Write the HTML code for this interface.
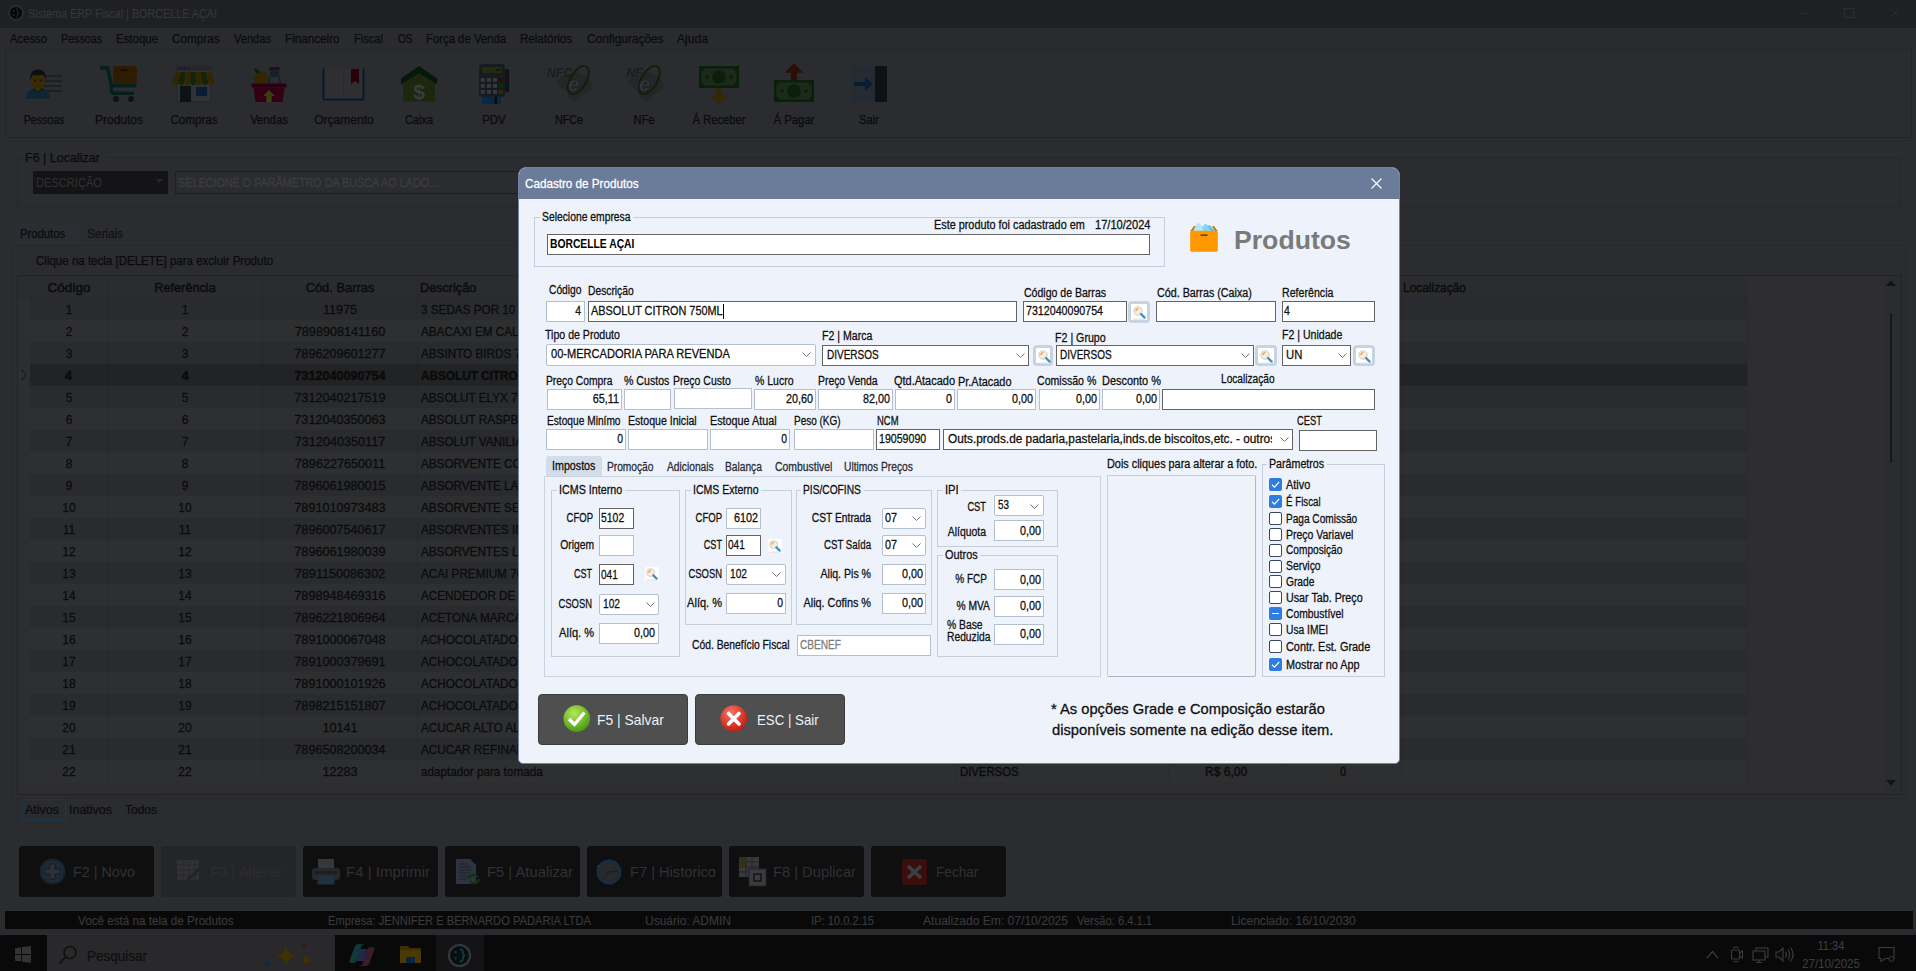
<!DOCTYPE html>
<html><head><meta charset="utf-8"><style>
html,body{margin:0;padding:0;width:1916px;height:971px;overflow:hidden;background:#2b2c2f}
body{position:relative;font-family:"Liberation Sans",sans-serif}
.t{position:absolute;white-space:nowrap;font-family:"Liberation Sans",sans-serif}
svg{overflow:visible}
</style></head><body>
<div style="position:absolute;left:0px;top:0px;width:1916px;height:971px;box-sizing:border-box;background:#2b2c2f"></div>
<div style="position:absolute;left:0px;top:0px;width:1916px;height:28px;box-sizing:border-box;background:#1f2023"></div>
<div style="position:absolute;left:0px;top:28px;width:1916px;height:21px;box-sizing:border-box;background:#2a2b2e"></div>
<svg style="position:absolute;left:7px;top:4px;" width="18" height="18" viewBox="0 0 18 18"><circle cx="9" cy="9" r="7" fill="#070707" stroke="#2a2a2c" stroke-width="2"/><circle cx="6.6" cy="7" r="1" fill="#07313a"/><circle cx="6.6" cy="11" r="1" fill="#07313a"/><path d="M9 4.5 q1.5 0 1.5 1.5 v2 l1 1 l-1 1 v2 q0 1.5 -1.5 1.5" fill="none" stroke="#07313a" stroke-width="1.2"/></svg>
<div class="t" style="left:28.00px;transform-origin:0 50%;transform:scaleX(0.8989);top:5.80px;font-size:12.00px;line-height:16px;letter-spacing:0.000px;color:#36373a;-webkit-text-stroke:0.10px #36373a;">Sistema ERP Fiscal | BORCELLE AÇAI</div>
<div style="position:absolute;left:1798px;top:13px;width:10px;height:1px;box-sizing:border-box;background:#2a2b2e"></div>
<div style="position:absolute;left:1844px;top:8px;width:10px;height:10px;box-sizing:border-box;border:1px solid #2c2d30"></div>
<svg style="position:absolute;left:1890px;top:8px;" width="10" height="10" viewBox="0 0 10 10"><path d="M0.5 0.5 L9.5 9.5 M9.5 0.5 L0.5 9.5" stroke="#2c2d30" stroke-width="1"/></svg>
<div class="t" style="left:10.00px;transform-origin:0 50%;transform:scaleX(0.9404);top:30.80px;font-size:12.00px;line-height:16px;letter-spacing:0.000px;color:#0b0b0c;-webkit-text-stroke:0.25px #0b0b0c;">Acesso</div>
<div class="t" style="left:61.00px;transform-origin:0 50%;transform:scaleX(0.8910);top:30.80px;font-size:12.00px;line-height:16px;letter-spacing:0.000px;color:#0b0b0c;-webkit-text-stroke:0.25px #0b0b0c;">Pessoas</div>
<div class="t" style="left:116.00px;transform-origin:0 50%;transform:scaleX(0.9542);top:30.80px;font-size:12.00px;line-height:16px;letter-spacing:0.000px;color:#0b0b0c;-webkit-text-stroke:0.25px #0b0b0c;">Estoque</div>
<div class="t" style="left:172.40px;transform-origin:0 50%;transform:scaleX(0.9777);top:30.80px;font-size:12.00px;line-height:16px;letter-spacing:0.000px;color:#0b0b0c;-webkit-text-stroke:0.25px #0b0b0c;">Compras</div>
<div class="t" style="left:234.30px;transform-origin:0 50%;transform:scaleX(0.9243);top:30.80px;font-size:12.00px;line-height:16px;letter-spacing:0.000px;color:#0b0b0c;-webkit-text-stroke:0.25px #0b0b0c;">Vendas</div>
<div class="t" style="left:285.20px;transform-origin:0 50%;transform:scaleX(0.9745);top:30.80px;font-size:12.00px;line-height:16px;letter-spacing:0.000px;color:#0b0b0c;-webkit-text-stroke:0.25px #0b0b0c;">Financeiro</div>
<div class="t" style="left:354.00px;transform-origin:0 50%;transform:scaleX(0.9252);top:30.80px;font-size:12.00px;line-height:16px;letter-spacing:0.000px;color:#0b0b0c;-webkit-text-stroke:0.25px #0b0b0c;">Fiscal</div>
<div class="t" style="left:397.50px;transform-origin:0 50%;transform:scaleX(0.8368);top:30.80px;font-size:12.00px;line-height:16px;letter-spacing:0.000px;color:#0b0b0c;-webkit-text-stroke:0.25px #0b0b0c;">OS</div>
<div class="t" style="left:426.00px;transform-origin:0 50%;transform:scaleX(0.9445);top:30.80px;font-size:12.00px;line-height:16px;letter-spacing:0.000px;color:#0b0b0c;-webkit-text-stroke:0.25px #0b0b0c;">Força de Venda</div>
<div class="t" style="left:520.00px;transform-origin:0 50%;transform:scaleX(0.9624);top:30.80px;font-size:12.00px;line-height:16px;letter-spacing:0.000px;color:#0b0b0c;-webkit-text-stroke:0.25px #0b0b0c;">Relatórios</div>
<div class="t" style="left:586.50px;transform-origin:0 50%;transform:scaleX(0.9887);top:30.80px;font-size:12.00px;line-height:16px;letter-spacing:0.000px;color:#0b0b0c;-webkit-text-stroke:0.25px #0b0b0c;">Configurações</div>
<div class="t" style="left:677.00px;transform-origin:0 50%;transform:scaleX(1.0102);top:30.80px;font-size:12.00px;line-height:16px;letter-spacing:0.000px;color:#0b0b0c;-webkit-text-stroke:0.25px #0b0b0c;">Ajuda</div>
<div style="position:absolute;left:5px;top:49px;width:1907px;height:89px;box-sizing:border-box;border:1px solid #242528"></div>
<div class="t" style="left:-456.50px;width:1000px;text-align:center;transform-origin:50% 50%;transform:scaleX(0.8845);top:111.50px;font-size:12.00px;line-height:16px;letter-spacing:0.000px;color:#0b0b0c;-webkit-text-stroke:0.25px #0b0b0c;">Pessoas</div>
<div class="t" style="left:-381.50px;width:1000px;text-align:center;transform-origin:50% 50%;transform:scaleX(0.9955);top:111.50px;font-size:12.00px;line-height:16px;letter-spacing:0.000px;color:#0b0b0c;-webkit-text-stroke:0.25px #0b0b0c;">Produtos</div>
<div class="t" style="left:-306.50px;width:1000px;text-align:center;transform-origin:50% 50%;transform:scaleX(0.9653);top:111.50px;font-size:12.00px;line-height:16px;letter-spacing:0.000px;color:#0b0b0c;-webkit-text-stroke:0.25px #0b0b0c;">Compras</div>
<div class="t" style="left:-231.50px;width:1000px;text-align:center;transform-origin:50% 50%;transform:scaleX(0.9393);top:111.50px;font-size:12.00px;line-height:16px;letter-spacing:0.000px;color:#0b0b0c;-webkit-text-stroke:0.25px #0b0b0c;">Vendas</div>
<div class="t" style="left:-156.50px;width:1000px;text-align:center;transform-origin:50% 50%;transform:scaleX(1.0026);top:111.50px;font-size:12.00px;line-height:16px;letter-spacing:0.000px;color:#0b0b0c;-webkit-text-stroke:0.25px #0b0b0c;">Orçamento</div>
<div class="t" style="left:-81.50px;width:1000px;text-align:center;transform-origin:50% 50%;transform:scaleX(0.9189);top:111.50px;font-size:12.00px;line-height:16px;letter-spacing:0.000px;color:#0b0b0c;-webkit-text-stroke:0.25px #0b0b0c;">Caixa</div>
<div class="t" style="left:-6.50px;width:1000px;text-align:center;transform-origin:50% 50%;transform:scaleX(0.9525);top:111.50px;font-size:12.00px;line-height:16px;letter-spacing:0.000px;color:#0b0b0c;-webkit-text-stroke:0.25px #0b0b0c;">PDV</div>
<div class="t" style="left:68.50px;width:1000px;text-align:center;transform-origin:50% 50%;transform:scaleX(0.8997);top:111.50px;font-size:12.00px;line-height:16px;letter-spacing:0.000px;color:#0b0b0c;-webkit-text-stroke:0.25px #0b0b0c;">NFCe</div>
<div class="t" style="left:143.50px;width:1000px;text-align:center;transform-origin:50% 50%;transform:scaleX(0.9263);top:111.50px;font-size:12.00px;line-height:16px;letter-spacing:0.000px;color:#0b0b0c;-webkit-text-stroke:0.25px #0b0b0c;">NFe</div>
<div class="t" style="left:218.50px;width:1000px;text-align:center;transform-origin:50% 50%;transform:scaleX(0.9314);top:111.50px;font-size:12.00px;line-height:16px;letter-spacing:0.000px;color:#0b0b0c;-webkit-text-stroke:0.25px #0b0b0c;">Á Receber</div>
<div class="t" style="left:293.50px;width:1000px;text-align:center;transform-origin:50% 50%;transform:scaleX(0.9482);top:111.50px;font-size:12.00px;line-height:16px;letter-spacing:0.000px;color:#0b0b0c;-webkit-text-stroke:0.25px #0b0b0c;">Á Pagar</div>
<div class="t" style="left:368.50px;width:1000px;text-align:center;transform-origin:50% 50%;transform:scaleX(0.9370);top:111.50px;font-size:12.00px;line-height:16px;letter-spacing:0.000px;color:#0b0b0c;-webkit-text-stroke:0.25px #0b0b0c;">Sair</div>
<svg style="position:absolute;left:24px;top:66px;" width="40" height="36" viewBox="0 0 40 36">
    <rect x="21" y="9.2" width="17" height="1.8" fill="#1c1f22"/>
    <rect x="21" y="14.2" width="17" height="1.8" fill="#1c1f22"/>
    <rect x="19" y="19.1" width="19" height="1.8" fill="#1c1f22"/>
    <rect x="21" y="24.1" width="17" height="1.8" fill="#1c1f22"/>
    <path d="M2 32.8 q0-10.5 12-10.5 q12 0 12 10.5 z" fill="#0c2633"/>
    <path d="M9.5 22.8 q4.5 4.2 9 0" stroke="#07141f" stroke-width="1.8" fill="none"/>
    <rect x="11" y="20" width="6" height="5" rx="2" fill="#392b00"/>
    <ellipse cx="14" cy="16" rx="6.6" ry="8" fill="#392b00"/>
    <path d="M6.5 15 q-1.5-11 7.5-11.5 q9 0.5 7.5 11.5 q-0.5-5-3-6.5 q-4.5 1.5-9 0 q-2.5 1.5-3 6.5z" fill="#0d0d0d"/>
    <circle cx="11" cy="14.4" r="0.9" fill="#190c04"/><circle cx="17" cy="14.4" r="0.9" fill="#190c04"/></svg>
<svg style="position:absolute;left:99px;top:65px;" width="40" height="38" viewBox="0 0 40 38">
    <rect x="14.1" y="1" width="23.8" height="17.8" rx="2" fill="#2d1c00"/>
    <rect x="21.5" y="4.5" width="7" height="1.3" fill="#120b00"/>
    <circle cx="3" cy="2.8" r="2.2" fill="#05211e"/>
    <path d="M3 2.8 H8.5 L12.2 19.4 V25 q0 3.2 3.2 3.2 H35" fill="none" stroke="#05211e" stroke-width="3.5"/>
    <path d="M13 19.1 H38 L36.5 22.6 H13z" fill="#05211e"/>
    <circle cx="17" cy="34" r="2.9" fill="#0c1314"/><circle cx="32" cy="34" r="2.9" fill="#0c1314"/></svg>
<svg style="position:absolute;left:172px;top:65px;" width="44" height="38" viewBox="0 0 44 38">
    <rect x="4" y="0.5" width="36" height="37" fill="#26272a"/>
    <rect x="5.5" y="6" width="33" height="30" fill="#313235"/>
    <circle cx="8.5" cy="3.3" r="1.1" fill="#1a1b1d"/><circle cx="12.5" cy="3.3" r="1.1" fill="#1a1b1d"/><circle cx="16.5" cy="3.3" r="1.1" fill="#1a1b1d"/>
    <path d="M4 7 h4.6 l-2.4 10 h-5.6z" fill="#332600"/><path d="M8.6 7 h5 l-1 10 h-6.4z" fill="#14240b"/><path d="M13.6 7 h5 l-0.4 10 h-6z" fill="#332600"/>
    <path d="M18.6 7 h5 l0.4 10 h-6z" fill="#14240b"/><path d="M23.6 7 h5 l1 10 h-6z" fill="#332600"/><path d="M28.6 7 h5 l2.2 10 h-6.2z" fill="#14240b"/><path d="M33.6 7 h5 l4 10 h-6.8z" fill="#332600"/>
    <circle cx="3.3" cy="17" r="3" fill="#332600"/><circle cx="9.3" cy="17" r="3" fill="#14240b"/><circle cx="15.3" cy="17" r="3" fill="#332600"/><circle cx="21.3" cy="17" r="3" fill="#14240b"/><circle cx="27.3" cy="17" r="3" fill="#332600"/><circle cx="33.3" cy="17" r="3" fill="#14240b"/><circle cx="39.3" cy="17" r="3" fill="#332600"/>
    <rect x="8" y="21" width="11" height="16" fill="#0d1214"/>
    <rect x="24" y="22" width="11" height="9" fill="#071d33"/></svg>
<svg style="position:absolute;left:250px;top:64px;" width="38" height="40" viewBox="0 0 38 40">
    <rect x="19" y="3" width="11" height="3.6" rx="1.8" fill="#1e0e26"/>
    <path d="M20 6.5 h9 v5 l3.5 11 h-16 l3.5-11z" fill="#152128"/>
    <path d="M21 13 h7 l2.5 9.5 h-12z" fill="#2b2c2f"/>
    <circle cx="11" cy="14.5" r="7.2" fill="#352600"/>
    <path d="M3.5 4.5 q5 0 7 5 q-5 0.5-7-5z" fill="#07220b"/>
    <rect x="1.5" y="19.5" width="35" height="4" rx="1" fill="#2a0012"/>
    <path d="M3.5 23.5 h31 l-2 14.5 h-27z" fill="#330012"/>
    <path d="M19 26 l6 6 h-3.3 v6 h-5.4 v-6 h-3.3z" fill="#3d3c12"/></svg>
<svg style="position:absolute;left:322px;top:67px;" width="44" height="35" viewBox="0 0 44 35">
    <path d="M1.5 1.5 v29.5 q0 1.5 1.5 1.5 h37 q1.5 0 1.5 -1.5 v-29.5" fill="#2f2f31" stroke="#021b2d" stroke-width="2"/>
    <rect x="21" y="1" width="0.8" height="31" fill="#2a2a2c"/>
    <path d="M29 2 h8 v15 l-4-3 l-4 3z" fill="#280005"/></svg>
<svg style="position:absolute;left:400px;top:65px;" width="38" height="38" viewBox="0 0 38 38">
    <path d="M3.1 18.3 L19.1 8.3 L35 18.3 V36.8 H3.1z" fill="#1c280e"/>
    <path d="M1.1 13.5 L19.1 1.1 L37.1 13.5 V19.5 L19.1 8.3 L1.1 19.5z" fill="#05190a"/>
    <text x="19.1" y="33.5" font-family="Liberation Sans" font-weight="bold" font-size="21" text-anchor="middle" fill="#3a3b3d">$</text></svg>
<svg style="position:absolute;left:478px;top:63px;" width="34" height="42" viewBox="0 0 34 42">
    <rect x="27" y="6" width="4.2" height="23.5" rx="1.8" fill="#101417"/>
    <rect x="1.1" y="1.1" width="25.8" height="32.6" rx="3" fill="#151b20"/>
    <rect x="4" y="4" width="20" height="6" fill="#242b0e"/>
    <rect x="18.5" y="6.3" width="1.6" height="1.6" fill="#0b0d05"/><rect x="21" y="6.3" width="1.6" height="1.6" fill="#0b0d05"/>
    <g fill="#39393b"><rect x="2.8" y="15" width="4" height="3.8"/><rect x="9" y="15" width="4" height="3.8"/><rect x="15" y="15" width="4" height="3.8"/>
    <rect x="2.8" y="21" width="4" height="3.8"/><rect x="9" y="21" width="4" height="3.8"/><rect x="15" y="21" width="4" height="3.8"/>
    <rect x="2.8" y="27" width="4" height="3.8"/><rect x="9" y="27" width="4" height="3.8"/><rect x="15" y="27" width="4" height="3.8"/></g>
    <rect x="21" y="15" width="4" height="3.8" fill="#350909"/><rect x="21" y="21" width="4" height="3.8" fill="#0f2b0f"/><rect x="21" y="27" width="4" height="3.8" fill="#372800"/>
    <rect x="4" y="33.7" width="19" height="7.3" rx="1" fill="#0a2745"/><rect x="16.5" y="33.7" width="2.5" height="7.3" fill="#0b0b0b"/></svg>
<svg style="position:absolute;left:546px;top:64px;" width="48" height="40" viewBox="0 0 48 40">
        <path d="M10 18 Q14 12 22 11 L30 8 Q40 10 44 16 L47 22 Q44 28 38 30 L34 34 Q30 36 30 38 L26 36 Q22 32 20 26 Q14 24 10 18z" fill="#252628"/>
        <text x="0.8" y="12.7" font-family="Liberation Sans" font-style="italic" font-weight="bold" font-size="12.5" fill="#1c1d1f">NFC</text>
        <ellipse cx="33.5" cy="16" rx="8" ry="15.5" transform="rotate(30 33.5 16)" fill="none" stroke="#291e00" stroke-width="0.9"/>
        <ellipse cx="32" cy="16" rx="8" ry="15.5" transform="rotate(30 32 16)" fill="none" stroke="#0a1e0a" stroke-width="1.2"/>
        <text x="22" y="27" font-family="Liberation Sans" font-style="italic" font-weight="bold" font-size="20" fill="#38393b" stroke="#1c1d1f" stroke-width="0.6">e</text></svg>
<svg style="position:absolute;left:617px;top:64px;" width="48" height="40" viewBox="0 0 48 40">
        <path d="M10 18 Q14 12 22 11 L30 8 Q40 10 44 16 L47 22 Q44 28 38 30 L34 34 Q30 36 30 38 L26 36 Q22 32 20 26 Q14 24 10 18z" fill="#252628"/>
        <text x="9.2" y="12.7" font-family="Liberation Sans" font-style="italic" font-weight="bold" font-size="12.5" fill="#1c1d1f">NF</text>
        <ellipse cx="33.5" cy="16" rx="8" ry="15.5" transform="rotate(30 33.5 16)" fill="none" stroke="#291e00" stroke-width="0.9"/>
        <ellipse cx="32" cy="16" rx="8" ry="15.5" transform="rotate(30 32 16)" fill="none" stroke="#0a1e0a" stroke-width="1.2"/>
        <text x="22" y="27" font-family="Liberation Sans" font-style="italic" font-weight="bold" font-size="20" fill="#38393b" stroke="#1c1d1f" stroke-width="0.6">e</text></svg>
<svg style="position:absolute;left:698px;top:65px;" width="42" height="42" viewBox="0 0 42 42">
    <rect x="1" y="1" width="40" height="22" fill="#082108"/>
    <rect x="3.5" y="3.5" width="35" height="17" fill="#1c2a1c"/>
    <circle cx="3.5" cy="3.5" r="2.6" fill="#082108"/><circle cx="38.5" cy="3.5" r="2.6" fill="#082108"/><circle cx="3.5" cy="20.5" r="2.6" fill="#082108"/><circle cx="38.5" cy="20.5" r="2.6" fill="#082108"/>
    <circle cx="21" cy="12" r="6.8" fill="#0a1e0a"/><circle cx="9" cy="12" r="1.8" fill="#0a1e0a"/><circle cx="33" cy="12" r="1.8" fill="#0a1e0a"/>
    <path d="M18.3 23 h5.7 v7 h6 l-9 9.5 l-9-9.5 h6.3z" fill="#352800"/></svg>
<svg style="position:absolute;left:773px;top:62px;" width="42" height="42" viewBox="0 0 42 42">
    <path d="M17.9 19 h6 v-8.2 h6.1 l-9-9.8 l-9.2 9.8 h6.1z" fill="#2b0e06"/>
    <rect x="1" y="18" width="40" height="22" fill="#082108"/>
    <rect x="3.5" y="20.5" width="35" height="17" fill="#1c2a1c"/>
    <circle cx="3.5" cy="20.5" r="2.6" fill="#082108"/><circle cx="38.5" cy="20.5" r="2.6" fill="#082108"/><circle cx="3.5" cy="37.5" r="2.6" fill="#082108"/><circle cx="38.5" cy="37.5" r="2.6" fill="#082108"/>
    <circle cx="21" cy="29" r="6.8" fill="#0a1e0a"/><circle cx="9" cy="29" r="1.8" fill="#0a1e0a"/><circle cx="33" cy="29" r="1.8" fill="#0a1e0a"/></svg>
<svg style="position:absolute;left:851px;top:66px;" width="38" height="36" viewBox="0 0 38 36">
    <rect x="0" y="0" width="24" height="36" fill="#252b33"/>
    <rect x="24" y="0" width="12" height="36" fill="#0f1215"/>
    <path d="M3 16 h11 v-5 l8 7 l-8 7 v-5 h-11z" fill="#071e32"/></svg>
<div style="position:absolute;left:17px;top:157px;width:1884px;height:50px;box-sizing:border-box;border:1px solid #25262a"></div>
<div style="position:absolute;left:22px;top:150px;width:84px;height:14px;box-sizing:border-box;background:#2b2c2f"></div>
<div class="t" style="left:25.00px;transform-origin:0 50%;transform:scaleX(1.0444);top:149.60px;font-size:12.00px;line-height:16px;letter-spacing:0.000px;color:#0b0b0c;-webkit-text-stroke:0.25px #0b0b0c;">F6 | Localizar</div>
<div style="position:absolute;left:33px;top:171px;width:135px;height:23px;box-sizing:border-box;background:#141416"></div>
<div class="t" style="left:35.50px;transform-origin:0 50%;transform:scaleX(0.9251);top:174.60px;font-size:12.00px;line-height:16px;letter-spacing:0.000px;color:#303135;">DESCRIÇÃO</div>
<svg style="position:absolute;left:155px;top:179px;" width="9" height="6" viewBox="0 0 9 6"><path d="M1 0 h7 l-3.5 4z" fill="#26272a"/></svg>
<div style="position:absolute;left:175px;top:171px;width:1220px;height:23px;box-sizing:border-box;border:1px solid #1e1f22;background:#2b2c2f"></div>
<div class="t" style="left:177.50px;transform-origin:0 50%;transform:scaleX(0.8993);top:174.60px;font-size:12.00px;line-height:16px;letter-spacing:0.000px;color:#3b3c3f;-webkit-text-stroke:0.35px #3b3c3f;">SELECIONE O PARÂMETRO DA BUSCA AO LADO...</div>
<div style="position:absolute;left:14px;top:221px;width:65px;height:25px;box-sizing:border-box;background:#2a2d31;border-radius:3px 3px 0 0"></div>
<div class="t" style="left:20.00px;transform-origin:0 50%;transform:scaleX(0.9372);top:225.60px;font-size:12.00px;line-height:16px;letter-spacing:0.000px;color:#0b0b0c;-webkit-text-stroke:0.25px #0b0b0c;">Produtos</div>
<div class="t" style="left:87.00px;transform-origin:0 50%;transform:scaleX(0.9813);top:226.20px;font-size:12.00px;line-height:16px;letter-spacing:0.000px;color:#121213;-webkit-text-stroke:0.25px #121213;">Seriais</div>
<div style="position:absolute;left:12px;top:245px;width:1894px;height:554px;box-sizing:border-box;border:1px solid #26272a"></div>
<div class="t" style="left:36.00px;transform-origin:0 50%;transform:scaleX(0.9605);top:253.40px;font-size:12.00px;line-height:16px;letter-spacing:0.000px;color:#0b0b0c;-webkit-text-stroke:0.25px #0b0b0c;">Clique na tecla [DELETE] para excluir Produto</div>
<div style="position:absolute;left:17px;top:275px;width:1885px;height:520px;box-sizing:border-box;border:1px solid #232427"></div>
<div style="position:absolute;left:18px;top:276px;width:1883px;height:517px;box-sizing:border-box;background:#2e2e30"></div>
<div style="position:absolute;left:18px;top:276px;width:1729px;height:22px;box-sizing:border-box;background:#2b2c2e"></div>
<div style="position:absolute;left:18px;top:297px;width:1729px;height:1px;box-sizing:border-box;background:#262729"></div>
<div style="position:absolute;left:18px;top:298px;width:12px;height:484px;box-sizing:border-box;background:#2d2e30"></div>
<div class="t" style="left:-431.50px;width:1000px;text-align:center;transform-origin:50% 50%;transform:scaleX(1.0432);top:278.80px;font-size:13.00px;line-height:17px;letter-spacing:0.000px;color:#0b0b0c;-webkit-text-stroke:0.45px #0b0b0c;">Código</div>
<div class="t" style="left:-314.70px;width:1000px;text-align:center;transform-origin:50% 50%;transform:scaleX(0.9763);top:278.80px;font-size:13.00px;line-height:17px;letter-spacing:0.000px;color:#0b0b0c;-webkit-text-stroke:0.45px #0b0b0c;">Referência</div>
<div class="t" style="left:-159.60px;width:1000px;text-align:center;transform-origin:50% 50%;transform:scaleX(0.9903);top:278.80px;font-size:13.00px;line-height:17px;letter-spacing:0.000px;color:#0b0b0c;-webkit-text-stroke:0.45px #0b0b0c;">Cód. Barras</div>
<div class="t" style="left:420.30px;transform-origin:0 50%;transform:scaleX(0.9738);top:278.80px;font-size:13.00px;line-height:17px;letter-spacing:0.000px;color:#0b0b0c;-webkit-text-stroke:0.45px #0b0b0c;">Descrição</div>
<div class="t" style="left:1403.00px;transform-origin:0 50%;transform:scaleX(0.9172);top:278.80px;font-size:13.00px;line-height:17px;letter-spacing:0.000px;color:#0b0b0c;-webkit-text-stroke:0.45px #0b0b0c;">Localização</div>
<div style="position:absolute;left:30px;top:298px;width:1717px;height:22px;box-sizing:border-box;background:#2a2b2e"></div>
<div class="t" style="left:-431.50px;width:1000px;text-align:center;transform-origin:50% 50%;transform:scaleX(0.9803);top:301.50px;font-size:12.20px;line-height:16px;letter-spacing:0.000px;color:#0b0b0c;-webkit-text-stroke:0.28px #0b0b0c;">1</div>
<div class="t" style="left:-314.70px;width:1000px;text-align:center;transform-origin:50% 50%;transform:scaleX(0.9803);top:301.50px;font-size:12.20px;line-height:16px;letter-spacing:0.000px;color:#0b0b0c;-webkit-text-stroke:0.28px #0b0b0c;">1</div>
<div class="t" style="left:-159.60px;width:1000px;text-align:center;transform-origin:50% 50%;transform:scaleX(1.0360);top:301.50px;font-size:12.20px;line-height:16px;letter-spacing:0.000px;color:#0b0b0c;-webkit-text-stroke:0.28px #0b0b0c;">11975</div>
<div class="t" style="left:421.00px;transform-origin:0 50%;transform:scaleX(0.9608);top:301.50px;font-size:12.20px;line-height:16px;letter-spacing:0.000px;color:#0b0b0c;-webkit-text-stroke:0.28px #0b0b0c;">3 SEDAS POR 10 UN</div>
<div style="position:absolute;left:30px;top:320px;width:1717px;height:22px;box-sizing:border-box;background:#2e2f31"></div>
<div class="t" style="left:-431.50px;width:1000px;text-align:center;transform-origin:50% 50%;transform:scaleX(0.9803);top:323.50px;font-size:12.20px;line-height:16px;letter-spacing:0.000px;color:#0b0b0c;-webkit-text-stroke:0.28px #0b0b0c;">2</div>
<div class="t" style="left:-314.70px;width:1000px;text-align:center;transform-origin:50% 50%;transform:scaleX(0.9803);top:323.50px;font-size:12.20px;line-height:16px;letter-spacing:0.000px;color:#0b0b0c;-webkit-text-stroke:0.28px #0b0b0c;">2</div>
<div class="t" style="left:-159.60px;width:1000px;text-align:center;transform-origin:50% 50%;transform:scaleX(1.0360);top:323.50px;font-size:12.20px;line-height:16px;letter-spacing:0.000px;color:#0b0b0c;-webkit-text-stroke:0.28px #0b0b0c;">7898908141160</div>
<div class="t" style="left:421.00px;transform-origin:0 50%;transform:scaleX(0.9609);top:323.50px;font-size:12.20px;line-height:16px;letter-spacing:0.000px;color:#0b0b0c;-webkit-text-stroke:0.28px #0b0b0c;">ABACAXI EM CALDA</div>
<div style="position:absolute;left:30px;top:342px;width:1717px;height:22px;box-sizing:border-box;background:#2a2b2e"></div>
<div class="t" style="left:-431.50px;width:1000px;text-align:center;transform-origin:50% 50%;transform:scaleX(0.9803);top:345.50px;font-size:12.20px;line-height:16px;letter-spacing:0.000px;color:#0b0b0c;-webkit-text-stroke:0.28px #0b0b0c;">3</div>
<div class="t" style="left:-314.70px;width:1000px;text-align:center;transform-origin:50% 50%;transform:scaleX(0.9803);top:345.50px;font-size:12.20px;line-height:16px;letter-spacing:0.000px;color:#0b0b0c;-webkit-text-stroke:0.28px #0b0b0c;">3</div>
<div class="t" style="left:-159.60px;width:1000px;text-align:center;transform-origin:50% 50%;transform:scaleX(1.0360);top:345.50px;font-size:12.20px;line-height:16px;letter-spacing:0.000px;color:#0b0b0c;-webkit-text-stroke:0.28px #0b0b0c;">7896209601277</div>
<div class="t" style="left:421.00px;transform-origin:0 50%;transform:scaleX(0.9607);top:345.50px;font-size:12.20px;line-height:16px;letter-spacing:0.000px;color:#0b0b0c;-webkit-text-stroke:0.28px #0b0b0c;">ABSINTO BIRDS 750</div>
<div style="position:absolute;left:30px;top:364px;width:1717px;height:22px;box-sizing:border-box;background:#222325"></div>
<div class="t" style="left:-431.50px;width:1000px;text-align:center;transform-origin:50% 50%;transform:scaleX(1.0000);top:367.50px;font-size:12.50px;line-height:16px;letter-spacing:0.000px;color:#0b0b0c;font-weight:bold;-webkit-text-stroke:0.50px #0b0b0c;">4</div>
<div class="t" style="left:-314.70px;width:1000px;text-align:center;transform-origin:50% 50%;transform:scaleX(1.0000);top:367.50px;font-size:12.50px;line-height:16px;letter-spacing:0.000px;color:#0b0b0c;font-weight:bold;-webkit-text-stroke:0.50px #0b0b0c;">4</div>
<div class="t" style="left:-159.60px;width:1000px;text-align:center;transform-origin:50% 50%;transform:scaleX(1.0067);top:367.50px;font-size:12.50px;line-height:16px;letter-spacing:0.000px;color:#0b0b0c;font-weight:bold;-webkit-text-stroke:0.50px #0b0b0c;">7312040090754</div>
<div class="t" style="left:421.00px;transform-origin:0 50%;transform:scaleX(0.9406);top:367.50px;font-size:12.50px;line-height:16px;letter-spacing:0.000px;color:#0b0b0c;font-weight:bold;-webkit-text-stroke:0.50px #0b0b0c;">ABSOLUT CITRON 750ML</div>
<div style="position:absolute;left:30px;top:386px;width:1717px;height:22px;box-sizing:border-box;background:#2a2b2e"></div>
<div class="t" style="left:-431.50px;width:1000px;text-align:center;transform-origin:50% 50%;transform:scaleX(0.9803);top:389.50px;font-size:12.20px;line-height:16px;letter-spacing:0.000px;color:#0b0b0c;-webkit-text-stroke:0.28px #0b0b0c;">5</div>
<div class="t" style="left:-314.70px;width:1000px;text-align:center;transform-origin:50% 50%;transform:scaleX(0.9803);top:389.50px;font-size:12.20px;line-height:16px;letter-spacing:0.000px;color:#0b0b0c;-webkit-text-stroke:0.28px #0b0b0c;">5</div>
<div class="t" style="left:-159.60px;width:1000px;text-align:center;transform-origin:50% 50%;transform:scaleX(1.0360);top:389.50px;font-size:12.20px;line-height:16px;letter-spacing:0.000px;color:#0b0b0c;-webkit-text-stroke:0.28px #0b0b0c;">7312040217519</div>
<div class="t" style="left:421.00px;transform-origin:0 50%;transform:scaleX(0.9606);top:389.50px;font-size:12.20px;line-height:16px;letter-spacing:0.000px;color:#0b0b0c;-webkit-text-stroke:0.28px #0b0b0c;">ABSOLUT ELYX 750</div>
<div style="position:absolute;left:30px;top:408px;width:1717px;height:22px;box-sizing:border-box;background:#2e2f31"></div>
<div class="t" style="left:-431.50px;width:1000px;text-align:center;transform-origin:50% 50%;transform:scaleX(0.9803);top:411.50px;font-size:12.20px;line-height:16px;letter-spacing:0.000px;color:#0b0b0c;-webkit-text-stroke:0.28px #0b0b0c;">6</div>
<div class="t" style="left:-314.70px;width:1000px;text-align:center;transform-origin:50% 50%;transform:scaleX(0.9803);top:411.50px;font-size:12.20px;line-height:16px;letter-spacing:0.000px;color:#0b0b0c;-webkit-text-stroke:0.28px #0b0b0c;">6</div>
<div class="t" style="left:-159.60px;width:1000px;text-align:center;transform-origin:50% 50%;transform:scaleX(1.0360);top:411.50px;font-size:12.20px;line-height:16px;letter-spacing:0.000px;color:#0b0b0c;-webkit-text-stroke:0.28px #0b0b0c;">7312040350063</div>
<div class="t" style="left:421.00px;transform-origin:0 50%;transform:scaleX(0.9610);top:411.50px;font-size:12.20px;line-height:16px;letter-spacing:0.000px;color:#0b0b0c;-webkit-text-stroke:0.28px #0b0b0c;">ABSOLUT RASPBERRI</div>
<div style="position:absolute;left:30px;top:430px;width:1717px;height:22px;box-sizing:border-box;background:#2a2b2e"></div>
<div class="t" style="left:-431.50px;width:1000px;text-align:center;transform-origin:50% 50%;transform:scaleX(0.9803);top:433.50px;font-size:12.20px;line-height:16px;letter-spacing:0.000px;color:#0b0b0c;-webkit-text-stroke:0.28px #0b0b0c;">7</div>
<div class="t" style="left:-314.70px;width:1000px;text-align:center;transform-origin:50% 50%;transform:scaleX(0.9803);top:433.50px;font-size:12.20px;line-height:16px;letter-spacing:0.000px;color:#0b0b0c;-webkit-text-stroke:0.28px #0b0b0c;">7</div>
<div class="t" style="left:-159.60px;width:1000px;text-align:center;transform-origin:50% 50%;transform:scaleX(1.0360);top:433.50px;font-size:12.20px;line-height:16px;letter-spacing:0.000px;color:#0b0b0c;-webkit-text-stroke:0.28px #0b0b0c;">7312040350117</div>
<div class="t" style="left:421.00px;transform-origin:0 50%;transform:scaleX(0.9607);top:433.50px;font-size:12.20px;line-height:16px;letter-spacing:0.000px;color:#0b0b0c;-webkit-text-stroke:0.28px #0b0b0c;">ABSOLUT VANILIA</div>
<div style="position:absolute;left:30px;top:452px;width:1717px;height:22px;box-sizing:border-box;background:#2e2f31"></div>
<div class="t" style="left:-431.50px;width:1000px;text-align:center;transform-origin:50% 50%;transform:scaleX(0.9803);top:455.50px;font-size:12.20px;line-height:16px;letter-spacing:0.000px;color:#0b0b0c;-webkit-text-stroke:0.28px #0b0b0c;">8</div>
<div class="t" style="left:-314.70px;width:1000px;text-align:center;transform-origin:50% 50%;transform:scaleX(0.9803);top:455.50px;font-size:12.20px;line-height:16px;letter-spacing:0.000px;color:#0b0b0c;-webkit-text-stroke:0.28px #0b0b0c;">8</div>
<div class="t" style="left:-159.60px;width:1000px;text-align:center;transform-origin:50% 50%;transform:scaleX(1.0360);top:455.50px;font-size:12.20px;line-height:16px;letter-spacing:0.000px;color:#0b0b0c;-webkit-text-stroke:0.28px #0b0b0c;">7896227650011</div>
<div class="t" style="left:421.00px;transform-origin:0 50%;transform:scaleX(0.9610);top:455.50px;font-size:12.20px;line-height:16px;letter-spacing:0.000px;color:#0b0b0c;-webkit-text-stroke:0.28px #0b0b0c;">ABSORVENTE COM</div>
<div style="position:absolute;left:30px;top:474px;width:1717px;height:22px;box-sizing:border-box;background:#2a2b2e"></div>
<div class="t" style="left:-431.50px;width:1000px;text-align:center;transform-origin:50% 50%;transform:scaleX(0.9803);top:477.50px;font-size:12.20px;line-height:16px;letter-spacing:0.000px;color:#0b0b0c;-webkit-text-stroke:0.28px #0b0b0c;">9</div>
<div class="t" style="left:-314.70px;width:1000px;text-align:center;transform-origin:50% 50%;transform:scaleX(0.9803);top:477.50px;font-size:12.20px;line-height:16px;letter-spacing:0.000px;color:#0b0b0c;-webkit-text-stroke:0.28px #0b0b0c;">9</div>
<div class="t" style="left:-159.60px;width:1000px;text-align:center;transform-origin:50% 50%;transform:scaleX(1.0360);top:477.50px;font-size:12.20px;line-height:16px;letter-spacing:0.000px;color:#0b0b0c;-webkit-text-stroke:0.28px #0b0b0c;">7896061980015</div>
<div class="t" style="left:421.00px;transform-origin:0 50%;transform:scaleX(0.9611);top:477.50px;font-size:12.20px;line-height:16px;letter-spacing:0.000px;color:#0b0b0c;-webkit-text-stroke:0.28px #0b0b0c;">ABSORVENTE LAVANDA</div>
<div style="position:absolute;left:30px;top:496px;width:1717px;height:22px;box-sizing:border-box;background:#2e2f31"></div>
<div class="t" style="left:-431.50px;width:1000px;text-align:center;transform-origin:50% 50%;transform:scaleX(0.9803);top:499.50px;font-size:12.20px;line-height:16px;letter-spacing:0.000px;color:#0b0b0c;-webkit-text-stroke:0.28px #0b0b0c;">10</div>
<div class="t" style="left:-314.70px;width:1000px;text-align:center;transform-origin:50% 50%;transform:scaleX(0.9803);top:499.50px;font-size:12.20px;line-height:16px;letter-spacing:0.000px;color:#0b0b0c;-webkit-text-stroke:0.28px #0b0b0c;">10</div>
<div class="t" style="left:-159.60px;width:1000px;text-align:center;transform-origin:50% 50%;transform:scaleX(1.0360);top:499.50px;font-size:12.20px;line-height:16px;letter-spacing:0.000px;color:#0b0b0c;-webkit-text-stroke:0.28px #0b0b0c;">7891010973483</div>
<div class="t" style="left:421.00px;transform-origin:0 50%;transform:scaleX(0.9611);top:499.50px;font-size:12.20px;line-height:16px;letter-spacing:0.000px;color:#0b0b0c;-webkit-text-stroke:0.28px #0b0b0c;">ABSORVENTE SEMPRE</div>
<div style="position:absolute;left:30px;top:518px;width:1717px;height:22px;box-sizing:border-box;background:#2a2b2e"></div>
<div class="t" style="left:-431.50px;width:1000px;text-align:center;transform-origin:50% 50%;transform:scaleX(0.9803);top:521.50px;font-size:12.20px;line-height:16px;letter-spacing:0.000px;color:#0b0b0c;-webkit-text-stroke:0.28px #0b0b0c;">11</div>
<div class="t" style="left:-314.70px;width:1000px;text-align:center;transform-origin:50% 50%;transform:scaleX(0.9803);top:521.50px;font-size:12.20px;line-height:16px;letter-spacing:0.000px;color:#0b0b0c;-webkit-text-stroke:0.28px #0b0b0c;">11</div>
<div class="t" style="left:-159.60px;width:1000px;text-align:center;transform-origin:50% 50%;transform:scaleX(1.0360);top:521.50px;font-size:12.20px;line-height:16px;letter-spacing:0.000px;color:#0b0b0c;-webkit-text-stroke:0.28px #0b0b0c;">7896007540617</div>
<div class="t" style="left:421.00px;transform-origin:0 50%;transform:scaleX(0.9610);top:521.50px;font-size:12.20px;line-height:16px;letter-spacing:0.000px;color:#0b0b0c;-webkit-text-stroke:0.28px #0b0b0c;">ABSORVENTES INTIMUS</div>
<div style="position:absolute;left:30px;top:540px;width:1717px;height:22px;box-sizing:border-box;background:#2e2f31"></div>
<div class="t" style="left:-431.50px;width:1000px;text-align:center;transform-origin:50% 50%;transform:scaleX(0.9803);top:543.50px;font-size:12.20px;line-height:16px;letter-spacing:0.000px;color:#0b0b0c;-webkit-text-stroke:0.28px #0b0b0c;">12</div>
<div class="t" style="left:-314.70px;width:1000px;text-align:center;transform-origin:50% 50%;transform:scaleX(0.9803);top:543.50px;font-size:12.20px;line-height:16px;letter-spacing:0.000px;color:#0b0b0c;-webkit-text-stroke:0.28px #0b0b0c;">12</div>
<div class="t" style="left:-159.60px;width:1000px;text-align:center;transform-origin:50% 50%;transform:scaleX(1.0360);top:543.50px;font-size:12.20px;line-height:16px;letter-spacing:0.000px;color:#0b0b0c;-webkit-text-stroke:0.28px #0b0b0c;">7896061980039</div>
<div class="t" style="left:421.00px;transform-origin:0 50%;transform:scaleX(0.9610);top:543.50px;font-size:12.20px;line-height:16px;letter-spacing:0.000px;color:#0b0b0c;-webkit-text-stroke:0.28px #0b0b0c;">ABSORVENTES LIVRE</div>
<div style="position:absolute;left:30px;top:562px;width:1717px;height:22px;box-sizing:border-box;background:#2a2b2e"></div>
<div class="t" style="left:-431.50px;width:1000px;text-align:center;transform-origin:50% 50%;transform:scaleX(0.9803);top:565.50px;font-size:12.20px;line-height:16px;letter-spacing:0.000px;color:#0b0b0c;-webkit-text-stroke:0.28px #0b0b0c;">13</div>
<div class="t" style="left:-314.70px;width:1000px;text-align:center;transform-origin:50% 50%;transform:scaleX(0.9803);top:565.50px;font-size:12.20px;line-height:16px;letter-spacing:0.000px;color:#0b0b0c;-webkit-text-stroke:0.28px #0b0b0c;">13</div>
<div class="t" style="left:-159.60px;width:1000px;text-align:center;transform-origin:50% 50%;transform:scaleX(1.0360);top:565.50px;font-size:12.20px;line-height:16px;letter-spacing:0.000px;color:#0b0b0c;-webkit-text-stroke:0.28px #0b0b0c;">7891150086302</div>
<div class="t" style="left:421.00px;transform-origin:0 50%;transform:scaleX(0.9608);top:565.50px;font-size:12.20px;line-height:16px;letter-spacing:0.000px;color:#0b0b0c;-webkit-text-stroke:0.28px #0b0b0c;">ACAI PREMIUM 700</div>
<div style="position:absolute;left:30px;top:584px;width:1717px;height:22px;box-sizing:border-box;background:#2e2f31"></div>
<div class="t" style="left:-431.50px;width:1000px;text-align:center;transform-origin:50% 50%;transform:scaleX(0.9803);top:587.50px;font-size:12.20px;line-height:16px;letter-spacing:0.000px;color:#0b0b0c;-webkit-text-stroke:0.28px #0b0b0c;">14</div>
<div class="t" style="left:-314.70px;width:1000px;text-align:center;transform-origin:50% 50%;transform:scaleX(0.9803);top:587.50px;font-size:12.20px;line-height:16px;letter-spacing:0.000px;color:#0b0b0c;-webkit-text-stroke:0.28px #0b0b0c;">14</div>
<div class="t" style="left:-159.60px;width:1000px;text-align:center;transform-origin:50% 50%;transform:scaleX(1.0360);top:587.50px;font-size:12.20px;line-height:16px;letter-spacing:0.000px;color:#0b0b0c;-webkit-text-stroke:0.28px #0b0b0c;">7898948469316</div>
<div class="t" style="left:421.00px;transform-origin:0 50%;transform:scaleX(0.9610);top:587.50px;font-size:12.20px;line-height:16px;letter-spacing:0.000px;color:#0b0b0c;-webkit-text-stroke:0.28px #0b0b0c;">ACENDEDOR DE FOGAO</div>
<div style="position:absolute;left:30px;top:606px;width:1717px;height:22px;box-sizing:border-box;background:#2a2b2e"></div>
<div class="t" style="left:-431.50px;width:1000px;text-align:center;transform-origin:50% 50%;transform:scaleX(0.9803);top:609.50px;font-size:12.20px;line-height:16px;letter-spacing:0.000px;color:#0b0b0c;-webkit-text-stroke:0.28px #0b0b0c;">15</div>
<div class="t" style="left:-314.70px;width:1000px;text-align:center;transform-origin:50% 50%;transform:scaleX(0.9803);top:609.50px;font-size:12.20px;line-height:16px;letter-spacing:0.000px;color:#0b0b0c;-webkit-text-stroke:0.28px #0b0b0c;">15</div>
<div class="t" style="left:-159.60px;width:1000px;text-align:center;transform-origin:50% 50%;transform:scaleX(1.0360);top:609.50px;font-size:12.20px;line-height:16px;letter-spacing:0.000px;color:#0b0b0c;-webkit-text-stroke:0.28px #0b0b0c;">7896221806964</div>
<div class="t" style="left:421.00px;transform-origin:0 50%;transform:scaleX(0.9612);top:609.50px;font-size:12.20px;line-height:16px;letter-spacing:0.000px;color:#0b0b0c;-webkit-text-stroke:0.28px #0b0b0c;">ACETONA MARCA</div>
<div style="position:absolute;left:30px;top:628px;width:1717px;height:22px;box-sizing:border-box;background:#2e2f31"></div>
<div class="t" style="left:-431.50px;width:1000px;text-align:center;transform-origin:50% 50%;transform:scaleX(0.9803);top:631.50px;font-size:12.20px;line-height:16px;letter-spacing:0.000px;color:#0b0b0c;-webkit-text-stroke:0.28px #0b0b0c;">16</div>
<div class="t" style="left:-314.70px;width:1000px;text-align:center;transform-origin:50% 50%;transform:scaleX(0.9803);top:631.50px;font-size:12.20px;line-height:16px;letter-spacing:0.000px;color:#0b0b0c;-webkit-text-stroke:0.28px #0b0b0c;">16</div>
<div class="t" style="left:-159.60px;width:1000px;text-align:center;transform-origin:50% 50%;transform:scaleX(1.0360);top:631.50px;font-size:12.20px;line-height:16px;letter-spacing:0.000px;color:#0b0b0c;-webkit-text-stroke:0.28px #0b0b0c;">7891000067048</div>
<div class="t" style="left:421.00px;transform-origin:0 50%;transform:scaleX(0.9612);top:631.50px;font-size:12.20px;line-height:16px;letter-spacing:0.000px;color:#0b0b0c;-webkit-text-stroke:0.28px #0b0b0c;">ACHOCOLATADO NESCAU</div>
<div style="position:absolute;left:30px;top:650px;width:1717px;height:22px;box-sizing:border-box;background:#2a2b2e"></div>
<div class="t" style="left:-431.50px;width:1000px;text-align:center;transform-origin:50% 50%;transform:scaleX(0.9803);top:653.50px;font-size:12.20px;line-height:16px;letter-spacing:0.000px;color:#0b0b0c;-webkit-text-stroke:0.28px #0b0b0c;">17</div>
<div class="t" style="left:-314.70px;width:1000px;text-align:center;transform-origin:50% 50%;transform:scaleX(0.9803);top:653.50px;font-size:12.20px;line-height:16px;letter-spacing:0.000px;color:#0b0b0c;-webkit-text-stroke:0.28px #0b0b0c;">17</div>
<div class="t" style="left:-159.60px;width:1000px;text-align:center;transform-origin:50% 50%;transform:scaleX(1.0360);top:653.50px;font-size:12.20px;line-height:16px;letter-spacing:0.000px;color:#0b0b0c;-webkit-text-stroke:0.28px #0b0b0c;">7891000379691</div>
<div class="t" style="left:421.00px;transform-origin:0 50%;transform:scaleX(0.9612);top:653.50px;font-size:12.20px;line-height:16px;letter-spacing:0.000px;color:#0b0b0c;-webkit-text-stroke:0.28px #0b0b0c;">ACHOCOLATADO NESCAU</div>
<div style="position:absolute;left:30px;top:672px;width:1717px;height:22px;box-sizing:border-box;background:#2e2f31"></div>
<div class="t" style="left:-431.50px;width:1000px;text-align:center;transform-origin:50% 50%;transform:scaleX(0.9803);top:675.50px;font-size:12.20px;line-height:16px;letter-spacing:0.000px;color:#0b0b0c;-webkit-text-stroke:0.28px #0b0b0c;">18</div>
<div class="t" style="left:-314.70px;width:1000px;text-align:center;transform-origin:50% 50%;transform:scaleX(0.9803);top:675.50px;font-size:12.20px;line-height:16px;letter-spacing:0.000px;color:#0b0b0c;-webkit-text-stroke:0.28px #0b0b0c;">18</div>
<div class="t" style="left:-159.60px;width:1000px;text-align:center;transform-origin:50% 50%;transform:scaleX(1.0360);top:675.50px;font-size:12.20px;line-height:16px;letter-spacing:0.000px;color:#0b0b0c;-webkit-text-stroke:0.28px #0b0b0c;">7891000101926</div>
<div class="t" style="left:421.00px;transform-origin:0 50%;transform:scaleX(0.9612);top:675.50px;font-size:12.20px;line-height:16px;letter-spacing:0.000px;color:#0b0b0c;-webkit-text-stroke:0.28px #0b0b0c;">ACHOCOLATADO NESCAU</div>
<div style="position:absolute;left:30px;top:694px;width:1717px;height:22px;box-sizing:border-box;background:#2a2b2e"></div>
<div class="t" style="left:-431.50px;width:1000px;text-align:center;transform-origin:50% 50%;transform:scaleX(0.9803);top:697.50px;font-size:12.20px;line-height:16px;letter-spacing:0.000px;color:#0b0b0c;-webkit-text-stroke:0.28px #0b0b0c;">19</div>
<div class="t" style="left:-314.70px;width:1000px;text-align:center;transform-origin:50% 50%;transform:scaleX(0.9803);top:697.50px;font-size:12.20px;line-height:16px;letter-spacing:0.000px;color:#0b0b0c;-webkit-text-stroke:0.28px #0b0b0c;">19</div>
<div class="t" style="left:-159.60px;width:1000px;text-align:center;transform-origin:50% 50%;transform:scaleX(1.0360);top:697.50px;font-size:12.20px;line-height:16px;letter-spacing:0.000px;color:#0b0b0c;-webkit-text-stroke:0.28px #0b0b0c;">7898215151807</div>
<div class="t" style="left:421.00px;transform-origin:0 50%;transform:scaleX(0.9611);top:697.50px;font-size:12.20px;line-height:16px;letter-spacing:0.000px;color:#0b0b0c;-webkit-text-stroke:0.28px #0b0b0c;">ACHOCOLATADO TODDY</div>
<div style="position:absolute;left:30px;top:716px;width:1717px;height:22px;box-sizing:border-box;background:#2e2f31"></div>
<div class="t" style="left:-431.50px;width:1000px;text-align:center;transform-origin:50% 50%;transform:scaleX(0.9803);top:719.50px;font-size:12.20px;line-height:16px;letter-spacing:0.000px;color:#0b0b0c;-webkit-text-stroke:0.28px #0b0b0c;">20</div>
<div class="t" style="left:-314.70px;width:1000px;text-align:center;transform-origin:50% 50%;transform:scaleX(0.9803);top:719.50px;font-size:12.20px;line-height:16px;letter-spacing:0.000px;color:#0b0b0c;-webkit-text-stroke:0.28px #0b0b0c;">20</div>
<div class="t" style="left:-159.60px;width:1000px;text-align:center;transform-origin:50% 50%;transform:scaleX(1.0360);top:719.50px;font-size:12.20px;line-height:16px;letter-spacing:0.000px;color:#0b0b0c;-webkit-text-stroke:0.28px #0b0b0c;">10141</div>
<div class="t" style="left:421.00px;transform-origin:0 50%;transform:scaleX(0.9611);top:719.50px;font-size:12.20px;line-height:16px;letter-spacing:0.000px;color:#0b0b0c;-webkit-text-stroke:0.28px #0b0b0c;">ACUCAR ALTO ALEGRE</div>
<div style="position:absolute;left:30px;top:738px;width:1717px;height:22px;box-sizing:border-box;background:#2a2b2e"></div>
<div class="t" style="left:-431.50px;width:1000px;text-align:center;transform-origin:50% 50%;transform:scaleX(0.9803);top:741.50px;font-size:12.20px;line-height:16px;letter-spacing:0.000px;color:#0b0b0c;-webkit-text-stroke:0.28px #0b0b0c;">21</div>
<div class="t" style="left:-314.70px;width:1000px;text-align:center;transform-origin:50% 50%;transform:scaleX(0.9803);top:741.50px;font-size:12.20px;line-height:16px;letter-spacing:0.000px;color:#0b0b0c;-webkit-text-stroke:0.28px #0b0b0c;">21</div>
<div class="t" style="left:-159.60px;width:1000px;text-align:center;transform-origin:50% 50%;transform:scaleX(1.0360);top:741.50px;font-size:12.20px;line-height:16px;letter-spacing:0.000px;color:#0b0b0c;-webkit-text-stroke:0.28px #0b0b0c;">7896508200034</div>
<div class="t" style="left:421.00px;transform-origin:0 50%;transform:scaleX(0.9614);top:741.50px;font-size:12.20px;line-height:16px;letter-spacing:0.000px;color:#0b0b0c;-webkit-text-stroke:0.28px #0b0b0c;">ACUCAR REFINADO</div>
<div style="position:absolute;left:30px;top:760px;width:1717px;height:22px;box-sizing:border-box;background:#2e2f31"></div>
<div class="t" style="left:-431.50px;width:1000px;text-align:center;transform-origin:50% 50%;transform:scaleX(0.9803);top:763.50px;font-size:12.20px;line-height:16px;letter-spacing:0.000px;color:#0b0b0c;-webkit-text-stroke:0.28px #0b0b0c;">22</div>
<div class="t" style="left:-314.70px;width:1000px;text-align:center;transform-origin:50% 50%;transform:scaleX(0.9803);top:763.50px;font-size:12.20px;line-height:16px;letter-spacing:0.000px;color:#0b0b0c;-webkit-text-stroke:0.28px #0b0b0c;">22</div>
<div class="t" style="left:-159.60px;width:1000px;text-align:center;transform-origin:50% 50%;transform:scaleX(1.0360);top:763.50px;font-size:12.20px;line-height:16px;letter-spacing:0.000px;color:#0b0b0c;-webkit-text-stroke:0.28px #0b0b0c;">12283</div>
<div class="t" style="left:421.00px;transform-origin:0 50%;transform:scaleX(0.9601);top:763.50px;font-size:12.20px;line-height:16px;letter-spacing:0.000px;color:#0b0b0c;-webkit-text-stroke:0.28px #0b0b0c;">adaptador para tomada</div>
<svg style="position:absolute;left:21px;top:369px;" width="6" height="12" viewBox="0 0 6 12"><path d="M0.5 0.5 L5 6 L0.5 11.5" fill="none" stroke="#141517" stroke-width="1"/></svg>
<div style="position:absolute;left:107px;top:276px;width:1px;height:506px;box-sizing:border-box;background:rgba(0,0,0,0.07)"></div>
<div style="position:absolute;left:262px;top:276px;width:1px;height:506px;box-sizing:border-box;background:rgba(0,0,0,0.07)"></div>
<div style="position:absolute;left:417px;top:276px;width:1px;height:506px;box-sizing:border-box;background:rgba(0,0,0,0.07)"></div>
<div style="position:absolute;left:956px;top:276px;width:1px;height:506px;box-sizing:border-box;background:rgba(0,0,0,0.07)"></div>
<div style="position:absolute;left:1168px;top:276px;width:1px;height:506px;box-sizing:border-box;background:rgba(0,0,0,0.07)"></div>
<div style="position:absolute;left:1285px;top:276px;width:1px;height:506px;box-sizing:border-box;background:rgba(0,0,0,0.07)"></div>
<div style="position:absolute;left:1401px;top:276px;width:1px;height:506px;box-sizing:border-box;background:rgba(0,0,0,0.07)"></div>
<div style="position:absolute;left:1747px;top:276px;width:1px;height:506px;box-sizing:border-box;background:rgba(0,0,0,0.07)"></div>
<div class="t" style="left:960.00px;transform-origin:0 50%;transform:scaleX(0.9052);top:763.50px;font-size:12.50px;line-height:16px;letter-spacing:0.000px;color:#0b0b0c;-webkit-text-stroke:0.40px #0b0b0c;">DIVERSOS</div>
<div class="t" style="left:1205.40px;transform-origin:0 50%;transform:scaleX(0.9639);top:763.50px;font-size:12.50px;line-height:16px;letter-spacing:0.000px;color:#0b0b0c;-webkit-text-stroke:0.40px #0b0b0c;">R$ 6,00</div>
<div class="t" style="left:843.00px;width:1000px;text-align:center;transform-origin:50% 50%;transform:scaleX(0.8696);top:763.50px;font-size:12.50px;line-height:16px;letter-spacing:0.000px;color:#0b0b0c;-webkit-text-stroke:0.40px #0b0b0c;">0</div>
<div style="position:absolute;left:1883px;top:276px;width:18px;height:517px;box-sizing:border-box;background:#2b2c2f"></div>
<svg style="position:absolute;left:1885px;top:279px;" width="12" height="8" viewBox="0 0 12 8"><path d="M1 7 L6 1.5 L11 7z" fill="#121315"/></svg>
<div style="position:absolute;left:1890px;top:313px;width:2px;height:150px;box-sizing:border-box;background:#16171a"></div>
<svg style="position:absolute;left:1885px;top:779px;" width="12" height="8" viewBox="0 0 12 8"><path d="M1 1 L6 6.5 L11 1z" fill="#121315"/></svg>
<div style="position:absolute;left:22px;top:799px;width:44px;height:22px;box-sizing:border-box;border:1px solid #1d3550"></div>
<div style="position:absolute;left:66px;top:799px;width:54px;height:22px;box-sizing:border-box;border:1px solid #2c2d30;border-left:none"></div>
<div style="position:absolute;left:120px;top:799px;width:46px;height:22px;box-sizing:border-box;border:1px solid #2c2d30;border-left:none"></div>
<div class="t" style="left:25.00px;transform-origin:0 50%;transform:scaleX(1.0407);top:802.00px;font-size:12.00px;line-height:16px;letter-spacing:0.000px;color:#0b0b0c;-webkit-text-stroke:0.20px #0b0b0c;">Ativos</div>
<div class="t" style="left:69.00px;transform-origin:0 50%;transform:scaleX(1.0401);top:801.70px;font-size:12.00px;line-height:16px;letter-spacing:0.000px;color:#0b0b0c;-webkit-text-stroke:0.20px #0b0b0c;">Inativos</div>
<div class="t" style="left:125.00px;transform-origin:0 50%;transform:scaleX(0.9995);top:801.70px;font-size:12.00px;line-height:16px;letter-spacing:0.000px;color:#0b0b0c;-webkit-text-stroke:0.20px #0b0b0c;">Todos</div>
<div style="position:absolute;left:19px;top:846px;width:135px;height:51px;box-sizing:border-box;background:#0f0f10;border-radius:3px"></div>
<div style="position:absolute;left:161px;top:846px;width:135px;height:51px;box-sizing:border-box;background:#242527;border-radius:3px"></div>
<div style="position:absolute;left:303px;top:846px;width:135px;height:51px;box-sizing:border-box;background:#0f0f10;border-radius:3px"></div>
<div style="position:absolute;left:445px;top:846px;width:135px;height:51px;box-sizing:border-box;background:#0f0f10;border-radius:3px"></div>
<div style="position:absolute;left:587px;top:846px;width:135px;height:51px;box-sizing:border-box;background:#0f0f10;border-radius:3px"></div>
<div style="position:absolute;left:729px;top:846px;width:135px;height:51px;box-sizing:border-box;background:#0f0f10;border-radius:3px"></div>
<div style="position:absolute;left:871px;top:846px;width:135px;height:51px;box-sizing:border-box;background:#0f0f10;border-radius:3px"></div>
<svg style="position:absolute;left:39px;top:858px;" width="27" height="27" viewBox="0 0 27 27"><circle cx="13.5" cy="13.5" r="13" fill="#18232f"/><circle cx="13.5" cy="13.5" r="11" fill="#1c2b3a"/><path d="M11 6 h5 v5 h5 v5 h-5 v5 h-5 v-5 h-5 v-5 h5z" fill="#2e3236" stroke="#12181f" stroke-width="0.8"/></svg>
<div class="t" style="left:73.40px;transform-origin:0 50%;transform:scaleX(0.9575);top:861.80px;font-size:15.00px;line-height:20px;letter-spacing:0.000px;color:#303134;">F2 | Novo</div>
<svg style="position:absolute;left:176px;top:859px;" width="30" height="27" viewBox="0 0 30 27"><g fill="#303133"><rect x="1" y="1" width="22" height="20"/></g><g stroke="#2a2b2d" stroke-width="1"><path d="M1 6h22M1 11h22M1 16h22M7 1v20M13 1v20M19 1v20"/></g><path d="M8 25 l3-5 l15-15 l2 2 l-15 15z" fill="#232426"/></svg>
<div class="t" style="left:209.80px;transform-origin:0 50%;transform:scaleX(0.9850);top:861.80px;font-size:15.00px;line-height:20px;letter-spacing:0.000px;color:#2c2d30;">F3 | Alterar</div>
<svg style="position:absolute;left:311px;top:858px;" width="30" height="26" viewBox="0 0 30 26"><rect x="7" y="1" width="16" height="11" fill="#36373a"/><rect x="1" y="10" width="28" height="12" rx="3" fill="#25282c"/><rect x="4" y="13" width="22" height="3" fill="#1c1e21"/><rect x="7" y="18" width="16" height="8" fill="#1d3344" stroke="#2c2e31" stroke-width="1"/></svg>
<div class="t" style="left:346.10px;transform-origin:0 50%;transform:scaleX(1.0011);top:861.80px;font-size:15.00px;line-height:20px;letter-spacing:0.000px;color:#303134;">F4 | Imprimir</div>
<svg style="position:absolute;left:454px;top:858px;" width="27" height="28" viewBox="0 0 27 28"><path d="M2 1 h14 l6 6 v19 h-20z" fill="#2c3440"/><path d="M5 6h9M5 9h12M5 12h12M5 15h12M5 18h12M5 21h8" stroke="#1a2029" stroke-width="1"/><path d="M15 21 a5 5 0 0 1 9 -2" fill="none" stroke="#143212" stroke-width="2.4"/><path d="M25 21 a5 5 0 0 1 -9 2" fill="none" stroke="#143212" stroke-width="2.4"/></svg>
<div class="t" style="left:487.00px;transform-origin:0 50%;transform:scaleX(0.9855);top:861.80px;font-size:15.00px;line-height:20px;letter-spacing:0.000px;color:#303134;">F5 | Atualizar</div>
<svg style="position:absolute;left:595px;top:858px;" width="28" height="28" viewBox="0 0 28 28"><circle cx="14" cy="14" r="12.5" fill="#1b2c3c"/><circle cx="14" cy="14" r="9.5" fill="#27292c"/><path d="M14 14 L8 20 M14 14 L23 13" stroke="#202124" stroke-width="1.2"/><path d="M14 14 L23 13" stroke="#3a0f0f" stroke-width="1"/><path d="M1 8 l5 -2 l-1 5z" fill="#1f3347"/></svg>
<div class="t" style="left:629.70px;transform-origin:0 50%;transform:scaleX(0.9764);top:861.80px;font-size:15.00px;line-height:20px;letter-spacing:0.000px;color:#303134;">F7 | Historico</div>
<svg style="position:absolute;left:738px;top:856px;" width="29" height="32" viewBox="0 0 29 32"><g fill="#38393c"><rect x="1" y="1" width="20" height="20"/></g><path d="M1 6h20M1 11h20M1 16h20M8 1v20M14 1v20" stroke="#232427" stroke-width="1"/><rect x="1" y="1" width="6" height="5" fill="#3a2f10"/><rect x="1" y="7" width="6" height="4" fill="#3a2f10"/><rect x="11" y="13" width="17" height="17" fill="#3a3b3e" stroke="#232427"/><rect x="16" y="18" width="7" height="7" fill="none" stroke="#141517" stroke-width="1.5"/></svg>
<div class="t" style="left:773.30px;transform-origin:0 50%;transform:scaleX(0.9794);top:861.80px;font-size:15.00px;line-height:20px;letter-spacing:0.000px;color:#303134;">F8 | Duplicar</div>
<svg style="position:absolute;left:901px;top:858px;" width="27" height="28" viewBox="0 0 27 28"><rect x="1" y="1" width="25" height="26" rx="3" fill="#3b0e0e"/><path d="M7 8 L20 20 M20 8 L7 20" stroke="#3e3f42" stroke-width="3.5"/></svg>
<div class="t" style="left:935.50px;transform-origin:0 50%;transform:scaleX(0.9082);top:861.80px;font-size:15.00px;line-height:20px;letter-spacing:0.000px;color:#303134;">Fechar</div>
<div style="position:absolute;left:5px;top:911px;width:1908px;height:18px;box-sizing:border-box;background:#09090a"></div>
<div class="t" style="left:78.20px;transform-origin:0 50%;transform:scaleX(0.9722);top:912.50px;font-size:12.00px;line-height:16px;letter-spacing:0.000px;color:#3a3b3d;-webkit-text-stroke:0.10px #3a3b3d;">Você está na tela de Produtos</div>
<div class="t" style="left:328.30px;transform-origin:0 50%;transform:scaleX(0.9274);top:912.50px;font-size:12.00px;line-height:16px;letter-spacing:0.000px;color:#3a3b3d;-webkit-text-stroke:0.10px #3a3b3d;">Empresa: JENNIFER E BERNARDO PADARIA LTDA</div>
<div class="t" style="left:645.40px;transform-origin:0 50%;transform:scaleX(0.9996);top:912.50px;font-size:12.00px;line-height:16px;letter-spacing:0.000px;color:#3a3b3d;-webkit-text-stroke:0.10px #3a3b3d;">Usuário: ADMIN</div>
<div class="t" style="left:811.30px;transform-origin:0 50%;transform:scaleX(0.9265);top:912.50px;font-size:12.00px;line-height:16px;letter-spacing:0.000px;color:#3a3b3d;-webkit-text-stroke:0.10px #3a3b3d;">IP: 10.0.2.15</div>
<div class="t" style="left:923.00px;transform-origin:0 50%;transform:scaleX(1.0066);top:912.50px;font-size:12.00px;line-height:16px;letter-spacing:0.000px;color:#3a3b3d;-webkit-text-stroke:0.10px #3a3b3d;">Atualizado Em: 07/10/2025</div>
<div class="t" style="left:1077.30px;transform-origin:0 50%;transform:scaleX(0.9295);top:912.50px;font-size:12.00px;line-height:16px;letter-spacing:0.000px;color:#3a3b3d;-webkit-text-stroke:0.10px #3a3b3d;">Versão: 6.4.1.1</div>
<div class="t" style="left:1231.00px;transform-origin:0 50%;transform:scaleX(1.0059);top:912.50px;font-size:12.00px;line-height:16px;letter-spacing:0.000px;color:#3a3b3d;-webkit-text-stroke:0.10px #3a3b3d;">Licenciado: 16/10/2030</div>
<div style="position:absolute;left:0px;top:929px;width:1916px;height:6px;box-sizing:border-box;background:#2a2b2e"></div>
<div style="position:absolute;left:0px;top:935px;width:1916px;height:36px;box-sizing:border-box;background:#09090a"></div>
<div style="position:absolute;left:47px;top:935px;width:288px;height:36px;box-sizing:border-box;background:#29292b"></div>
<svg style="position:absolute;left:14px;top:946px;" width="18" height="18" viewBox="0 0 18 18"><g fill="#333335"><path d="M1 2.2 L7 1.3 V8 H1z"/><path d="M8 1.1 L17 0 V8 H8z"/><path d="M1 9 H7 V15.6 L1 14.8z"/><path d="M8 9 H17 V17 L8 15.8z"/></g></svg>
<svg style="position:absolute;left:58px;top:945px;" width="20" height="20" viewBox="0 0 20 20"><circle cx="12" cy="7.5" r="6" fill="none" stroke="#0e0e0f" stroke-width="1.5"/><path d="M7.5 12 L1.5 18.5" stroke="#0e0e0f" stroke-width="1.6"/></svg>
<div class="t" style="left:87.40px;transform-origin:0 50%;transform:scaleX(0.8995);top:945.60px;font-size:15.00px;line-height:20px;letter-spacing:0.000px;color:#0f0f10;-webkit-text-stroke:0.25px #0f0f10;">Pesquisar</div>
<svg style="position:absolute;left:262px;top:940px;" width="64" height="30" viewBox="0 0 64 30"><path d="M24 6 q2 9 10 10 q-8 1-10 10 q-2-9-10-10 q8-1 10-10z" fill="#3f3302"/><path d="M44 14 q1 5 5 6 q-4 1-5 6 q-1-5-5-6 q4-1 5-6z" fill="#3f3302"/><path d="M5 19 q1 4 4 4.5 q-3 .5-4 4.5 q-1-4-4-4.5 q3-.5 4-4.5z" fill="#0c2c45"/><circle cx="42" cy="5" r="1.6" fill="#3d1608"/><circle cx="60" cy="24" r="1.4" fill="#183510"/></svg>
<svg style="position:absolute;left:349px;top:943px;" width="26" height="24" viewBox="0 0 26 24"><defs><linearGradient id="cpa" x1="0" y1="0" x2="1" y2="1"><stop offset="0" stop-color="#0d3a4a"/><stop offset="1" stop-color="#123a20"/></linearGradient><linearGradient id="cpb" x1="0" y1="0" x2="1" y2="1"><stop offset="0" stop-color="#2a1a45"/><stop offset="1" stop-color="#45200f"/></linearGradient></defs><path d="M6 3 q1-2 4-2 h6 q-3 0-4 3 l-4 13 q-1 3-4 3 h-2 q-2 0-1.5-2z" fill="url(#cpa)"/><path d="M20 21 q-1 2-4 2 h-6 q3 0 4-3 l4-13 q1-3 4-3 h2 q2 0 1.5 2z" fill="url(#cpb)"/><path d="M10 6 h8 l-3 12 h-8z" fill="#1e2a48"/></svg>
<svg style="position:absolute;left:399px;top:944px;" width="23" height="20" viewBox="0 0 23 20"><path d="M1 2 h8 l2 2 h11 v15 h-21z" fill="#3d2d02"/><rect x="1" y="6" width="21" height="13" fill="#4a3805"/><rect x="7" y="13" width="9" height="6" fill="#0a2540"/></svg>
<div style="position:absolute;left:436px;top:935px;width:48px;height:36px;box-sizing:border-box;background:#141416"></div>
<svg style="position:absolute;left:447px;top:943px;" width="25" height="25" viewBox="0 0 25 25"><circle cx="12.5" cy="12.5" r="10.5" fill="#0b0e10" stroke="#36383b" stroke-width="2.2"/><path d="M8.5 8 v2.2 M8.5 14 v2.2" stroke="#0c3d46" stroke-width="2"/><path d="M13 6.5 q3 0 3 3 v1.5 l1.5 1.5 l-1.5 1.5 v1.5 q0 3-3 3" fill="none" stroke="#0c3d46" stroke-width="1.8"/></svg>
<svg style="position:absolute;left:1706px;top:950px;" width="13" height="9" viewBox="0 0 13 9"><path d="M0.7 8.3 L6.5 1.5 L12.3 8.3" fill="none" stroke="#3c3d40" stroke-width="1.2"/></svg>
<svg style="position:absolute;left:1730px;top:945px;" width="14" height="19" viewBox="0 0 14 19"><rect x="1.5" y="5" width="8" height="9" rx="1" fill="none" stroke="#3c3d40" stroke-width="1.1"/><path d="M9.5 8 l3-2 v7 l-3-2" fill="none" stroke="#3c3d40" stroke-width="1.1"/><path d="M3 3 q3-2 6 0 M3 16 q3 2 6 0" fill="none" stroke="#3c3d40" stroke-width="1"/></svg>
<svg style="position:absolute;left:1752px;top:947px;" width="17" height="16" viewBox="0 0 17 16"><rect x="4" y="1" width="12" height="9" fill="none" stroke="#3c3d40" stroke-width="1.1"/><rect x="1" y="4" width="12" height="9" fill="#0a0a0b" stroke="#3c3d40" stroke-width="1.1"/><path d="M7 13 v2.5 M4 15.5 h6" stroke="#3c3d40" stroke-width="1.1"/></svg>
<svg style="position:absolute;left:1775px;top:946px;" width="18" height="17" viewBox="0 0 18 17"><path d="M1 6 h3 l4-4 v13 l-4-4 h-3z" fill="none" stroke="#3c3d40" stroke-width="1.1"/><path d="M10.5 5.5 q2 3 0 6 M13 3.5 q3.5 5 0 10 M15.5 1.5 q5 7 0 14" fill="none" stroke="#3c3d40" stroke-width="1.1"/></svg>
<div class="t" style="left:1330.80px;width:1000px;text-align:center;transform-origin:50% 50%;transform:scaleX(0.9270);top:937.70px;font-size:12.00px;line-height:16px;letter-spacing:0.000px;color:#3c3d40;-webkit-text-stroke:0.10px #3c3d40;">11:34</div>
<div class="t" style="left:1330.60px;width:1000px;text-align:center;transform-origin:50% 50%;transform:scaleX(0.9662);top:955.70px;font-size:12.00px;line-height:16px;letter-spacing:0.000px;color:#3c3d40;-webkit-text-stroke:0.10px #3c3d40;">27/10/2025</div>
<svg style="position:absolute;left:1878px;top:946px;" width="17" height="17" viewBox="0 0 17 17"><path d="M1 1.5 h15 v11 h-9 l-4 3 v-3 h-2z" fill="none" stroke="#3c3d40" stroke-width="1.1"/><circle cx="13.5" cy="13" r="2.5" fill="#0a0a0b" stroke="#3c3d40" stroke-width="1"/></svg>
<div style="position:absolute;left:518px;top:167px;width:882px;height:597px;background:#eef3fb;border:1px solid #7282a0;border-radius:8px 8px 5px 5px;box-sizing:border-box;overflow:hidden">
<div style="position:absolute;left:0;top:0;width:100%;height:31px;background:#6b7b9a"></div></div>
<div class="t" style="left:524.50px;transform-origin:0 50%;transform:scaleX(0.8972);top:174.90px;font-size:13.00px;line-height:17px;letter-spacing:0.000px;color:#ffffff;-webkit-text-stroke:0.28px #ffffff;">Cadastro de Produtos</div>
<svg style="position:absolute;left:1371px;top:178px;" width="11" height="11" viewBox="0 0 11 11"><path d="M0.5 0.5 L10.5 10.5 M10.5 0.5 L0.5 10.5" stroke="#ffffff" stroke-width="1.1"/></svg>
<div style="position:absolute;left:534px;top:217px;width:631px;height:50px;box-sizing:border-box;border:1px solid #c3cfde"></div>
<div style="position:absolute;left:539.7px;top:214px;width:93.5px;height:6px;box-sizing:border-box;background:#eef3fb"></div>
<div class="t" style="left:541.70px;transform-origin:0 50%;transform:scaleX(0.8616);top:209.20px;font-size:12.00px;line-height:16px;letter-spacing:0.000px;color:#101010;-webkit-text-stroke:0.28px #101010;">Selecione empresa</div>
<div class="t" style="left:934.40px;transform-origin:0 50%;transform:scaleX(0.9040);top:217.40px;font-size:12.00px;line-height:16px;letter-spacing:0.000px;color:#101010;-webkit-text-stroke:0.28px #101010;">Este produto foi cadastrado em</div>
<div class="t" style="left:1094.50px;transform-origin:0 50%;transform:scaleX(0.9245);top:217.40px;font-size:12.00px;line-height:16px;letter-spacing:0.000px;color:#101010;-webkit-text-stroke:0.28px #101010;">17/10/2024</div>
<div style="position:absolute;left:547px;top:234px;width:603px;height:21px;box-sizing:border-box;background:#fff;border:1px solid #646464;"></div>
<div class="t" style="left:549.80px;transform-origin:0 50%;transform:scaleX(0.8592);top:235.80px;font-size:12.00px;line-height:16px;letter-spacing:0.000px;color:#000;font-weight:bold;">BORCELLE AÇAI</div>
<svg style="position:absolute;left:1189px;top:221px;" width="30" height="32" viewBox="0 0 30 32"><path d="M1.3 10 L5 5 L7.2 5 L4.2 10z" fill="#c77800"/><path d="M28.7 10 L25 5 L22.8 5 L25.8 10z" fill="#c77800"/>
<path d="M4 10.2 L8.6 1.6 L20 10.2z" fill="#b3e5fc"/><path d="M13 7 L16.3 2.3 L19 5 L26 10.2 L15 10.2z" fill="#81d4fa"/><path d="M18.5 5 L20.6 4 L26 10.2 L22.5 10.2z" fill="#4fc3f7"/>
<rect x="1.2" y="9.8" width="27.6" height="21" rx="1.5" fill="#ff9800"/><rect x="11.3" y="13.3" width="7.4" height="1.8" rx="0.9" fill="#7a4a00"/></svg>
<div class="t" style="left:1234.10px;transform-origin:0 50%;transform:scaleX(1.0239);top:222.50px;font-size:26.00px;line-height:34px;letter-spacing:0.000px;color:#7a7a7a;font-weight:bold;">Produtos</div>
<div class="t" style="left:548.50px;transform-origin:0 50%;transform:scaleX(0.8546);top:282.00px;font-size:12.00px;line-height:16px;letter-spacing:0.000px;color:#101010;-webkit-text-stroke:0.28px #101010;">Código</div>
<div class="t" style="left:587.60px;transform-origin:0 50%;transform:scaleX(0.8565);top:283.00px;font-size:12.00px;line-height:16px;letter-spacing:0.000px;color:#101010;-webkit-text-stroke:0.28px #101010;">Descrição</div>
<div class="t" style="left:1023.50px;transform-origin:0 50%;transform:scaleX(0.8782);top:285.00px;font-size:12.00px;line-height:16px;letter-spacing:0.000px;color:#101010;-webkit-text-stroke:0.28px #101010;">Código de Barras</div>
<div class="t" style="left:1156.60px;transform-origin:0 50%;transform:scaleX(0.8941);top:285.00px;font-size:12.00px;line-height:16px;letter-spacing:0.000px;color:#101010;-webkit-text-stroke:0.28px #101010;">Cód. Barras (Caixa)</div>
<div class="t" style="left:1281.70px;transform-origin:0 50%;transform:scaleX(0.8857);top:285.00px;font-size:12.00px;line-height:16px;letter-spacing:0.000px;color:#101010;-webkit-text-stroke:0.28px #101010;">Referência</div>
<div style="position:absolute;left:546px;top:301px;width:39px;height:21px;box-sizing:border-box;background:#fff;border:1px solid #b4bfd0;"></div>
<div class="t" style="left:-418.70px;width:1000px;text-align:right;transform-origin:100% 50%;transform:scaleX(0.8700);top:303.00px;font-size:12.00px;line-height:16px;letter-spacing:0.000px;color:#101010;-webkit-text-stroke:0.28px #101010;">4</div>
<div style="position:absolute;left:588px;top:301px;width:429px;height:21px;box-sizing:border-box;background:#fff;border:1px solid #646464;"></div>
<div class="t" style="left:590.70px;transform-origin:0 50%;transform:scaleX(0.9068);top:303.00px;font-size:12.00px;line-height:16px;letter-spacing:0.000px;color:#101010;-webkit-text-stroke:0.28px #101010;">ABSOLUT CITRON 750ML</div>
<div style="position:absolute;left:723px;top:304px;width:1px;height:15px;box-sizing:border-box;background:#000"></div>
<div style="position:absolute;left:1023px;top:301px;width:104px;height:21px;box-sizing:border-box;background:#fff;border:1px solid #646464;"></div>
<div class="t" style="left:1025.70px;transform-origin:0 50%;transform:scaleX(0.8878);top:303.00px;font-size:12.00px;line-height:16px;letter-spacing:0.000px;color:#101010;-webkit-text-stroke:0.28px #101010;">7312040090754</div>
<div style="position:absolute;left:1128px;top:301px;width:22px;height:22px;box-sizing:border-box;background:#c6d3e1;border-radius:4px"></div>
<div style="position:absolute;left:1131px;top:304px;width:16px;height:16px;box-sizing:border-box;background:#ffffff"></div>
<svg style="position:absolute;left:1132px;top:305px;" width="15" height="15" viewBox="0 0 15 15"><circle cx="6" cy="6" r="4.2" fill="#f3ede4" stroke="#d6cbbd" stroke-width="1"/>
<path d="M3.8 6.2 q0.3-2.4 2.6-2.6" stroke="#f0a040" stroke-width="1.4" fill="none"/>
<path d="M9 9 L12.6 12.6" stroke="#3d8fc9" stroke-width="2.4" stroke-linecap="round"/>
<path d="M1 14.2 H13" stroke="#d9dde3" stroke-width="1"/></svg>
<div style="position:absolute;left:1156px;top:301px;width:120px;height:21px;box-sizing:border-box;background:#fff;border:1px solid #646464;"></div>
<div style="position:absolute;left:1282px;top:301px;width:93px;height:21px;box-sizing:border-box;background:#fff;border:1px solid #646464;"></div>
<div class="t" style="left:1284.00px;transform-origin:0 50%;transform:scaleX(0.8700);top:303.00px;font-size:12.00px;line-height:16px;letter-spacing:0.000px;color:#101010;-webkit-text-stroke:0.28px #101010;">4</div>
<div class="t" style="left:545.30px;transform-origin:0 50%;transform:scaleX(0.8820);top:326.70px;font-size:12.00px;line-height:16px;letter-spacing:0.000px;color:#101010;-webkit-text-stroke:0.28px #101010;">Tipo de Produto</div>
<div class="t" style="left:821.60px;transform-origin:0 50%;transform:scaleX(0.8823);top:328.30px;font-size:12.00px;line-height:16px;letter-spacing:0.000px;color:#101010;-webkit-text-stroke:0.28px #101010;">F2 | Marca</div>
<div class="t" style="left:1054.50px;transform-origin:0 50%;transform:scaleX(0.8875);top:329.60px;font-size:12.00px;line-height:16px;letter-spacing:0.000px;color:#101010;-webkit-text-stroke:0.28px #101010;">F2 | Grupo</div>
<div class="t" style="left:1281.70px;transform-origin:0 50%;transform:scaleX(0.8805);top:327.10px;font-size:12.00px;line-height:16px;letter-spacing:0.000px;color:#101010;-webkit-text-stroke:0.28px #101010;">F2 | Unidade</div>
<div style="position:absolute;left:546px;top:344px;width:270px;height:22px;box-sizing:border-box;background:#fff;border:1px solid #b4bfd0;border-radius:2px;"></div>
<div class="t" style="left:551.00px;transform-origin:0 50%;transform:scaleX(0.9225);top:346.00px;font-size:12.00px;line-height:16px;letter-spacing:0.000px;color:#101010;-webkit-text-stroke:0.28px #101010;">00-MERCADORIA PARA REVENDA</div>
<svg style="position:absolute;left:801.5px;top:351.5px;" width="9" height="5" viewBox="0 0 9 5"><path d="M0.5 0.5 L4.5 4.5 L8.5 0.5" fill="none" stroke="#6f7378" stroke-width="1"/></svg>
<div style="position:absolute;left:822px;top:345px;width:207px;height:21px;box-sizing:border-box;background:#fff;border:1px solid #646464;"></div>
<div class="t" style="left:826.60px;transform-origin:0 50%;transform:scaleX(0.8339);top:346.80px;font-size:12.00px;line-height:16px;letter-spacing:0.000px;color:#101010;-webkit-text-stroke:0.28px #101010;">DIVERSOS</div>
<svg style="position:absolute;left:1015.5px;top:352.5px;" width="9" height="5" viewBox="0 0 9 5"><path d="M0.5 0.5 L4.5 4.5 L8.5 0.5" fill="none" stroke="#6f7378" stroke-width="1"/></svg>
<div style="position:absolute;left:1033px;top:345px;width:20px;height:21px;box-sizing:border-box;background:#c6d3e1;border-radius:4px"></div>
<div style="position:absolute;left:1036px;top:348px;width:14px;height:15px;box-sizing:border-box;background:#ffffff"></div>
<svg style="position:absolute;left:1037px;top:349px;" width="15" height="15" viewBox="0 0 15 15"><circle cx="6" cy="6" r="4.2" fill="#f3ede4" stroke="#d6cbbd" stroke-width="1"/>
<path d="M3.8 6.2 q0.3-2.4 2.6-2.6" stroke="#f0a040" stroke-width="1.4" fill="none"/>
<path d="M9 9 L12.6 12.6" stroke="#3d8fc9" stroke-width="2.4" stroke-linecap="round"/>
<path d="M1 14.2 H13" stroke="#d9dde3" stroke-width="1"/></svg>
<div style="position:absolute;left:1056px;top:345px;width:198px;height:21px;box-sizing:border-box;background:#fff;border:1px solid #646464;"></div>
<div class="t" style="left:1060.10px;transform-origin:0 50%;transform:scaleX(0.8339);top:346.80px;font-size:12.00px;line-height:16px;letter-spacing:0.000px;color:#101010;-webkit-text-stroke:0.28px #101010;">DIVERSOS</div>
<svg style="position:absolute;left:1240.5px;top:352.5px;" width="9" height="5" viewBox="0 0 9 5"><path d="M0.5 0.5 L4.5 4.5 L8.5 0.5" fill="none" stroke="#6f7378" stroke-width="1"/></svg>
<div style="position:absolute;left:1255px;top:345px;width:22px;height:21px;box-sizing:border-box;background:#c6d3e1;border-radius:4px"></div>
<div style="position:absolute;left:1258px;top:348px;width:16px;height:15px;box-sizing:border-box;background:#ffffff"></div>
<svg style="position:absolute;left:1259px;top:349px;" width="15" height="15" viewBox="0 0 15 15"><circle cx="6" cy="6" r="4.2" fill="#f3ede4" stroke="#d6cbbd" stroke-width="1"/>
<path d="M3.8 6.2 q0.3-2.4 2.6-2.6" stroke="#f0a040" stroke-width="1.4" fill="none"/>
<path d="M9 9 L12.6 12.6" stroke="#3d8fc9" stroke-width="2.4" stroke-linecap="round"/>
<path d="M1 14.2 H13" stroke="#d9dde3" stroke-width="1"/></svg>
<div style="position:absolute;left:1282px;top:345px;width:69px;height:21px;box-sizing:border-box;background:#fff;border:1px solid #646464;"></div>
<div class="t" style="left:1286.30px;transform-origin:0 50%;transform:scaleX(0.9398);top:346.80px;font-size:12.00px;line-height:16px;letter-spacing:0.000px;color:#101010;-webkit-text-stroke:0.28px #101010;">UN</div>
<svg style="position:absolute;left:1337.5px;top:352.5px;" width="9" height="5" viewBox="0 0 9 5"><path d="M0.5 0.5 L4.5 4.5 L8.5 0.5" fill="none" stroke="#6f7378" stroke-width="1"/></svg>
<div style="position:absolute;left:1353px;top:345px;width:22px;height:21px;box-sizing:border-box;background:#c6d3e1;border-radius:4px"></div>
<div style="position:absolute;left:1356px;top:348px;width:16px;height:15px;box-sizing:border-box;background:#ffffff"></div>
<svg style="position:absolute;left:1357px;top:349px;" width="15" height="15" viewBox="0 0 15 15"><circle cx="6" cy="6" r="4.2" fill="#f3ede4" stroke="#d6cbbd" stroke-width="1"/>
<path d="M3.8 6.2 q0.3-2.4 2.6-2.6" stroke="#f0a040" stroke-width="1.4" fill="none"/>
<path d="M9 9 L12.6 12.6" stroke="#3d8fc9" stroke-width="2.4" stroke-linecap="round"/>
<path d="M1 14.2 H13" stroke="#d9dde3" stroke-width="1"/></svg>
<div class="t" style="left:545.60px;transform-origin:0 50%;transform:scaleX(0.8583);top:372.60px;font-size:12.00px;line-height:16px;letter-spacing:0.000px;color:#101010;-webkit-text-stroke:0.28px #101010;">Preço Compra</div>
<div class="t" style="left:623.70px;transform-origin:0 50%;transform:scaleX(0.8823);top:373.00px;font-size:12.00px;line-height:16px;letter-spacing:0.000px;color:#101010;-webkit-text-stroke:0.28px #101010;">% Custos</div>
<div class="t" style="left:672.50px;transform-origin:0 50%;transform:scaleX(0.8740);top:373.00px;font-size:12.00px;line-height:16px;letter-spacing:0.000px;color:#101010;-webkit-text-stroke:0.28px #101010;">Preço Custo</div>
<div class="t" style="left:754.80px;transform-origin:0 50%;transform:scaleX(0.8747);top:373.00px;font-size:12.00px;line-height:16px;letter-spacing:0.000px;color:#101010;-webkit-text-stroke:0.28px #101010;">% Lucro</div>
<div class="t" style="left:817.70px;transform-origin:0 50%;transform:scaleX(0.8660);top:373.00px;font-size:12.00px;line-height:16px;letter-spacing:0.000px;color:#101010;-webkit-text-stroke:0.28px #101010;">Preço Venda</div>
<div class="t" style="left:893.80px;transform-origin:0 50%;transform:scaleX(0.9149);top:373.00px;font-size:12.00px;line-height:16px;letter-spacing:0.000px;color:#101010;-webkit-text-stroke:0.28px #101010;">Qtd.Atacado</div>
<div class="t" style="left:957.50px;transform-origin:0 50%;transform:scaleX(0.9116);top:373.50px;font-size:12.00px;line-height:16px;letter-spacing:0.000px;color:#101010;-webkit-text-stroke:0.28px #101010;">Pr.Atacado</div>
<div class="t" style="left:1036.70px;transform-origin:0 50%;transform:scaleX(0.8804);top:373.00px;font-size:12.00px;line-height:16px;letter-spacing:0.000px;color:#101010;-webkit-text-stroke:0.28px #101010;">Comissão %</div>
<div class="t" style="left:1101.60px;transform-origin:0 50%;transform:scaleX(0.9105);top:373.00px;font-size:12.00px;line-height:16px;letter-spacing:0.000px;color:#101010;-webkit-text-stroke:0.28px #101010;">Desconto %</div>
<div class="t" style="left:1221.40px;transform-origin:0 50%;transform:scaleX(0.8458);top:371.40px;font-size:12.00px;line-height:16px;letter-spacing:0.000px;color:#101010;-webkit-text-stroke:0.28px #101010;">Localização</div>
<div style="position:absolute;left:547px;top:389px;width:75px;height:21px;box-sizing:border-box;background:#fff;border:1px solid #b4bfd0;"></div>
<div class="t" style="left:-381.50px;width:1000px;text-align:right;transform-origin:100% 50%;transform:scaleX(0.9000);top:391.00px;font-size:12.00px;line-height:16px;letter-spacing:0.000px;color:#101010;-webkit-text-stroke:0.28px #101010;">65,11</div>
<div style="position:absolute;left:624px;top:389px;width:47px;height:21px;box-sizing:border-box;background:#fff;border:1px solid #b4bfd0;"></div>
<div style="position:absolute;left:674px;top:388px;width:78px;height:21px;box-sizing:border-box;background:#fff;border:1px solid #b4bfd0;"></div>
<div style="position:absolute;left:754px;top:389px;width:62px;height:21px;box-sizing:border-box;background:#fff;border:1px solid #b4bfd0;"></div>
<div class="t" style="left:-187.50px;width:1000px;text-align:right;transform-origin:100% 50%;transform:scaleX(0.9000);top:391.00px;font-size:12.00px;line-height:16px;letter-spacing:0.000px;color:#101010;-webkit-text-stroke:0.28px #101010;">20,60</div>
<div style="position:absolute;left:818px;top:389px;width:75px;height:21px;box-sizing:border-box;background:#fff;border:1px solid #b4bfd0;"></div>
<div class="t" style="left:-110.50px;width:1000px;text-align:right;transform-origin:100% 50%;transform:scaleX(0.9000);top:391.00px;font-size:12.00px;line-height:16px;letter-spacing:0.000px;color:#101010;-webkit-text-stroke:0.28px #101010;">82,00</div>
<div style="position:absolute;left:895px;top:389px;width:60px;height:21px;box-sizing:border-box;background:#fff;border:1px solid #b4bfd0;"></div>
<div class="t" style="left:-48.50px;width:1000px;text-align:right;transform-origin:100% 50%;transform:scaleX(0.9000);top:391.00px;font-size:12.00px;line-height:16px;letter-spacing:0.000px;color:#101010;-webkit-text-stroke:0.28px #101010;">0</div>
<div style="position:absolute;left:957px;top:389px;width:79px;height:21px;box-sizing:border-box;background:#fff;border:1px solid #b4bfd0;"></div>
<div class="t" style="left:32.50px;width:1000px;text-align:right;transform-origin:100% 50%;transform:scaleX(0.9000);top:391.00px;font-size:12.00px;line-height:16px;letter-spacing:0.000px;color:#101010;-webkit-text-stroke:0.28px #101010;">0,00</div>
<div style="position:absolute;left:1039px;top:389px;width:61px;height:21px;box-sizing:border-box;background:#fff;border:1px solid #b4bfd0;"></div>
<div class="t" style="left:96.50px;width:1000px;text-align:right;transform-origin:100% 50%;transform:scaleX(0.9000);top:391.00px;font-size:12.00px;line-height:16px;letter-spacing:0.000px;color:#101010;-webkit-text-stroke:0.28px #101010;">0,00</div>
<div style="position:absolute;left:1102px;top:389px;width:58px;height:21px;box-sizing:border-box;background:#fff;border:1px solid #b4bfd0;"></div>
<div class="t" style="left:156.50px;width:1000px;text-align:right;transform-origin:100% 50%;transform:scaleX(0.9000);top:391.00px;font-size:12.00px;line-height:16px;letter-spacing:0.000px;color:#101010;-webkit-text-stroke:0.28px #101010;">0,00</div>
<div style="position:absolute;left:1162px;top:389px;width:213px;height:21px;box-sizing:border-box;background:#fff;border:1px solid #646464;"></div>
<div class="t" style="left:546.50px;transform-origin:0 50%;transform:scaleX(0.8479);top:413.00px;font-size:12.00px;line-height:16px;letter-spacing:0.000px;color:#101010;-webkit-text-stroke:0.28px #101010;">Estoque Minímo</div>
<div class="t" style="left:627.70px;transform-origin:0 50%;transform:scaleX(0.8804);top:413.00px;font-size:12.00px;line-height:16px;letter-spacing:0.000px;color:#101010;-webkit-text-stroke:0.28px #101010;">Estoque Inicial</div>
<div class="t" style="left:709.80px;transform-origin:0 50%;transform:scaleX(0.8983);top:413.00px;font-size:12.00px;line-height:16px;letter-spacing:0.000px;color:#101010;-webkit-text-stroke:0.28px #101010;">Estoque Atual</div>
<div class="t" style="left:793.60px;transform-origin:0 50%;transform:scaleX(0.8321);top:413.00px;font-size:12.00px;line-height:16px;letter-spacing:0.000px;color:#101010;-webkit-text-stroke:0.28px #101010;">Peso (KG)</div>
<div class="t" style="left:876.60px;transform-origin:0 50%;transform:scaleX(0.7863);top:413.00px;font-size:12.00px;line-height:16px;letter-spacing:0.000px;color:#101010;-webkit-text-stroke:0.28px #101010;">NCM</div>
<div class="t" style="left:1296.60px;transform-origin:0 50%;transform:scaleX(0.7812);top:413.00px;font-size:12.00px;line-height:16px;letter-spacing:0.000px;color:#101010;-webkit-text-stroke:0.28px #101010;">CEST</div>
<div style="position:absolute;left:546px;top:429px;width:80px;height:21px;box-sizing:border-box;background:#fff;border:1px solid #b4bfd0;"></div>
<div class="t" style="left:-377.50px;width:1000px;text-align:right;transform-origin:100% 50%;transform:scaleX(0.8700);top:431.00px;font-size:12.00px;line-height:16px;letter-spacing:0.000px;color:#101010;-webkit-text-stroke:0.28px #101010;">0</div>
<div style="position:absolute;left:628px;top:429px;width:80px;height:21px;box-sizing:border-box;background:#fff;border:1px solid #b4bfd0;"></div>
<div style="position:absolute;left:710px;top:429px;width:80px;height:21px;box-sizing:border-box;background:#fff;border:1px solid #b4bfd0;"></div>
<div class="t" style="left:-213.50px;width:1000px;text-align:right;transform-origin:100% 50%;transform:scaleX(0.8700);top:431.00px;font-size:12.00px;line-height:16px;letter-spacing:0.000px;color:#101010;-webkit-text-stroke:0.28px #101010;">0</div>
<div style="position:absolute;left:794px;top:429px;width:80px;height:21px;box-sizing:border-box;background:#fff;border:1px solid #b4bfd0;"></div>
<div style="position:absolute;left:876px;top:429px;width:64px;height:21px;box-sizing:border-box;background:#fff;border:1px solid #646464;"></div>
<div class="t" style="left:878.80px;transform-origin:0 50%;transform:scaleX(0.8843);top:431.00px;font-size:12.00px;line-height:16px;letter-spacing:0.000px;color:#101010;-webkit-text-stroke:0.28px #101010;">19059090</div>
<div style="position:absolute;left:943px;top:429px;width:350px;height:21px;box-sizing:border-box;background:#fff;border:1px solid #646464;"></div>
<div style="position:absolute;left:944px;top:430px;width:328px;height:19px;overflow:hidden">
<div class="t" style="left:3.50px;transform-origin:0 50%;transform:scaleX(0.9857);top:1.00px;font-size:12.00px;line-height:16px;letter-spacing:0.000px;color:#101010;-webkit-text-stroke:0.28px #101010;">Outs.prods.de padaria,pastelaria,inds.de biscoitos,etc. - outros</div>
</div>
<svg style="position:absolute;left:1279.5px;top:436.5px;" width="9" height="5" viewBox="0 0 9 5"><path d="M0.5 0.5 L4.5 4.5 L8.5 0.5" fill="none" stroke="#6f7378" stroke-width="1"/></svg>
<div style="position:absolute;left:1299px;top:430px;width:78px;height:21px;box-sizing:border-box;background:#fff;border:1px solid #646464;"></div>
<div style="position:absolute;left:546px;top:456px;width:56px;height:21px;box-sizing:border-box;background:#d3dde9;border-radius:3px 3px 0 0"></div>
<div class="t" style="left:551.90px;transform-origin:0 50%;transform:scaleX(0.8917);top:458.40px;font-size:12.00px;line-height:16px;letter-spacing:0.000px;color:#101010;-webkit-text-stroke:0.28px #101010;">Impostos</div>
<div class="t" style="left:607.40px;transform-origin:0 50%;transform:scaleX(0.8485);top:459.00px;font-size:12.00px;line-height:16px;letter-spacing:0.000px;color:#2a2d35;-webkit-text-stroke:0.28px #2a2d35;">Promoção</div>
<div class="t" style="left:666.80px;transform-origin:0 50%;transform:scaleX(0.8537);top:459.00px;font-size:12.00px;line-height:16px;letter-spacing:0.000px;color:#2a2d35;-webkit-text-stroke:0.28px #2a2d35;">Adicionais</div>
<div class="t" style="left:725.30px;transform-origin:0 50%;transform:scaleX(0.8510);top:459.00px;font-size:12.00px;line-height:16px;letter-spacing:0.000px;color:#2a2d35;-webkit-text-stroke:0.28px #2a2d35;">Balança</div>
<div class="t" style="left:774.70px;transform-origin:0 50%;transform:scaleX(0.8678);top:459.00px;font-size:12.00px;line-height:16px;letter-spacing:0.000px;color:#2a2d35;-webkit-text-stroke:0.28px #2a2d35;">Combustivel</div>
<div class="t" style="left:844.40px;transform-origin:0 50%;transform:scaleX(0.8539);top:459.00px;font-size:12.00px;line-height:16px;letter-spacing:0.000px;color:#2a2d35;-webkit-text-stroke:0.28px #2a2d35;">Ultimos Preços</div>
<div style="position:absolute;left:544px;top:476px;width:557px;height:201px;box-sizing:border-box;border:1px solid #c9d4e1"></div>
<div style="position:absolute;left:551px;top:490px;width:129px;height:167px;box-sizing:border-box;border:1px solid #c3cfde"></div>
<div style="position:absolute;left:556.7px;top:487px;width:68.1px;height:6px;box-sizing:border-box;background:#eef3fb"></div>
<div class="t" style="left:558.70px;transform-origin:0 50%;transform:scaleX(0.8929);top:482.20px;font-size:12.00px;line-height:16px;letter-spacing:0.000px;color:#101010;-webkit-text-stroke:0.28px #101010;">ICMS Interno</div>
<div class="t" style="left:-407.00px;width:1000px;text-align:right;transform-origin:100% 50%;transform:scaleX(0.7921);top:510.00px;font-size:12.00px;line-height:16px;letter-spacing:0.000px;color:#101010;-webkit-text-stroke:0.28px #101010;">CFOP</div>
<div style="position:absolute;left:599px;top:508px;width:35px;height:21px;box-sizing:border-box;background:#fff;border:1px solid #646464;"></div>
<div class="t" style="left:601.20px;transform-origin:0 50%;transform:scaleX(0.8693);top:510.30px;font-size:12.00px;line-height:16px;letter-spacing:0.000px;color:#101010;-webkit-text-stroke:0.28px #101010;">5102</div>
<div class="t" style="left:-405.60px;width:1000px;text-align:right;transform-origin:100% 50%;transform:scaleX(0.8591);top:537.10px;font-size:12.00px;line-height:16px;letter-spacing:0.000px;color:#101010;-webkit-text-stroke:0.28px #101010;">Origem</div>
<div style="position:absolute;left:599px;top:535px;width:35px;height:21px;box-sizing:border-box;background:#fff;border:1px solid #b4bfd0;"></div>
<div class="t" style="left:-408.40px;width:1000px;text-align:right;transform-origin:100% 50%;transform:scaleX(0.7542);top:566.10px;font-size:12.00px;line-height:16px;letter-spacing:0.000px;color:#101010;-webkit-text-stroke:0.28px #101010;">CST</div>
<div style="position:absolute;left:599px;top:564px;width:35px;height:21px;box-sizing:border-box;background:#fff;border:1px solid #646464;"></div>
<div class="t" style="left:601.00px;transform-origin:0 50%;transform:scaleX(0.8343);top:566.50px;font-size:12.00px;line-height:16px;letter-spacing:0.000px;color:#101010;-webkit-text-stroke:0.28px #101010;">041</div>
<div style="position:absolute;left:645px;top:566.5px;width:14px;height:14px;box-sizing:border-box;background:#fdfdfd"></div>
<svg style="position:absolute;left:645px;top:566.5px;" width="14" height="14" viewBox="0 0 15 15"><circle cx="6" cy="6" r="4.2" fill="#f3ede4" stroke="#d6cbbd" stroke-width="1"/>
<path d="M3.8 6.2 q0.3-2.4 2.6-2.6" stroke="#f0a040" stroke-width="1.4" fill="none"/>
<path d="M9 9 L12.6 12.6" stroke="#3d8fc9" stroke-width="2.4" stroke-linecap="round"/>
<path d="M1 14.2 H13" stroke="#d9dde3" stroke-width="1"/></svg>
<div class="t" style="left:-407.80px;width:1000px;text-align:right;transform-origin:100% 50%;transform:scaleX(0.7851);top:595.60px;font-size:12.00px;line-height:16px;letter-spacing:0.000px;color:#101010;-webkit-text-stroke:0.28px #101010;">CSOSN</div>
<div style="position:absolute;left:599px;top:594px;width:60px;height:21px;box-sizing:border-box;background:#fff;border:1px solid #b4bfd0;border-radius:2px;"></div>
<div class="t" style="left:602.70px;transform-origin:0 50%;transform:scaleX(0.8493);top:596.00px;font-size:12.00px;line-height:16px;letter-spacing:0.000px;color:#101010;-webkit-text-stroke:0.28px #101010;">102</div>
<svg style="position:absolute;left:645.5px;top:601.5px;" width="9" height="5" viewBox="0 0 9 5"><path d="M0.5 0.5 L4.5 4.5 L8.5 0.5" fill="none" stroke="#6f7378" stroke-width="1"/></svg>
<div class="t" style="left:-406.40px;width:1000px;text-align:right;transform-origin:100% 50%;transform:scaleX(0.9184);top:625.00px;font-size:12.00px;line-height:16px;letter-spacing:0.000px;color:#101010;-webkit-text-stroke:0.28px #101010;">Alíq. %</div>
<div style="position:absolute;left:599px;top:623px;width:60px;height:21px;box-sizing:border-box;background:#fff;border:1px solid #b4bfd0;"></div>
<div class="t" style="left:-344.60px;width:1000px;text-align:right;transform-origin:100% 50%;transform:scaleX(0.9000);top:625.30px;font-size:12.00px;line-height:16px;letter-spacing:0.000px;color:#101010;-webkit-text-stroke:0.28px #101010;">0,00</div>
<div style="position:absolute;left:685px;top:490px;width:107px;height:135px;box-sizing:border-box;border:1px solid #c3cfde"></div>
<div style="position:absolute;left:690.7px;top:487px;width:70.5px;height:6px;box-sizing:border-box;background:#eef3fb"></div>
<div class="t" style="left:692.70px;transform-origin:0 50%;transform:scaleX(0.8772);top:482.20px;font-size:12.00px;line-height:16px;letter-spacing:0.000px;color:#101010;-webkit-text-stroke:0.28px #101010;">ICMS Externo</div>
<div class="t" style="left:-278.00px;width:1000px;text-align:right;transform-origin:100% 50%;transform:scaleX(0.7921);top:510.00px;font-size:12.00px;line-height:16px;letter-spacing:0.000px;color:#101010;-webkit-text-stroke:0.28px #101010;">CFOP</div>
<div style="position:absolute;left:726px;top:508px;width:35px;height:21px;box-sizing:border-box;background:#fff;border:1px solid #b4bfd0;"></div>
<div class="t" style="left:-242.10px;width:1000px;text-align:right;transform-origin:100% 50%;transform:scaleX(0.8993);top:510.30px;font-size:12.00px;line-height:16px;letter-spacing:0.000px;color:#101010;-webkit-text-stroke:0.28px #101010;">6102</div>
<div class="t" style="left:-278.30px;width:1000px;text-align:right;transform-origin:100% 50%;transform:scaleX(0.7583);top:536.80px;font-size:12.00px;line-height:16px;letter-spacing:0.000px;color:#101010;-webkit-text-stroke:0.28px #101010;">CST</div>
<div style="position:absolute;left:726px;top:535px;width:35px;height:21px;box-sizing:border-box;background:#fff;border:1px solid #646464;"></div>
<div class="t" style="left:727.90px;transform-origin:0 50%;transform:scaleX(0.8343);top:537.20px;font-size:12.00px;line-height:16px;letter-spacing:0.000px;color:#101010;-webkit-text-stroke:0.28px #101010;">041</div>
<div style="position:absolute;left:768px;top:538.5px;width:14px;height:14px;box-sizing:border-box;background:#fdfdfd"></div>
<svg style="position:absolute;left:768px;top:538.5px;" width="14" height="14" viewBox="0 0 15 15"><circle cx="6" cy="6" r="4.2" fill="#f3ede4" stroke="#d6cbbd" stroke-width="1"/>
<path d="M3.8 6.2 q0.3-2.4 2.6-2.6" stroke="#f0a040" stroke-width="1.4" fill="none"/>
<path d="M9 9 L12.6 12.6" stroke="#3d8fc9" stroke-width="2.4" stroke-linecap="round"/>
<path d="M1 14.2 H13" stroke="#d9dde3" stroke-width="1"/></svg>
<div class="t" style="left:-278.00px;width:1000px;text-align:right;transform-origin:100% 50%;transform:scaleX(0.7851);top:565.80px;font-size:12.00px;line-height:16px;letter-spacing:0.000px;color:#101010;-webkit-text-stroke:0.28px #101010;">CSOSN</div>
<div style="position:absolute;left:726px;top:564px;width:60px;height:21px;box-sizing:border-box;background:#fff;border:1px solid #b4bfd0;border-radius:2px;"></div>
<div class="t" style="left:730.00px;transform-origin:0 50%;transform:scaleX(0.8493);top:566.30px;font-size:12.00px;line-height:16px;letter-spacing:0.000px;color:#101010;-webkit-text-stroke:0.28px #101010;">102</div>
<svg style="position:absolute;left:771.9px;top:571.8px;" width="9" height="5" viewBox="0 0 9 5"><path d="M0.5 0.5 L4.5 4.5 L8.5 0.5" fill="none" stroke="#6f7378" stroke-width="1"/></svg>
<div class="t" style="left:-278.00px;width:1000px;text-align:right;transform-origin:100% 50%;transform:scaleX(0.9184);top:595.10px;font-size:12.00px;line-height:16px;letter-spacing:0.000px;color:#101010;-webkit-text-stroke:0.28px #101010;">Alíq. %</div>
<div style="position:absolute;left:726px;top:593px;width:60px;height:21px;box-sizing:border-box;background:#fff;border:1px solid #b4bfd0;"></div>
<div class="t" style="left:-217.30px;width:1000px;text-align:right;transform-origin:100% 50%;transform:scaleX(0.8700);top:595.40px;font-size:12.00px;line-height:16px;letter-spacing:0.000px;color:#101010;-webkit-text-stroke:0.28px #101010;">0</div>
<div style="position:absolute;left:796px;top:490px;width:136px;height:135px;box-sizing:border-box;border:1px solid #c3cfde"></div>
<div style="position:absolute;left:801.2px;top:487px;width:62.8px;height:6px;box-sizing:border-box;background:#eef3fb"></div>
<div class="t" style="left:803.20px;transform-origin:0 50%;transform:scaleX(0.8502);top:482.20px;font-size:12.00px;line-height:16px;letter-spacing:0.000px;color:#101010;-webkit-text-stroke:0.28px #101010;">PIS/COFINS</div>
<div class="t" style="left:-129.30px;width:1000px;text-align:right;transform-origin:100% 50%;transform:scaleX(0.8564);top:510.00px;font-size:12.00px;line-height:16px;letter-spacing:0.000px;color:#101010;-webkit-text-stroke:0.28px #101010;">CST Entrada</div>
<div style="position:absolute;left:882px;top:508px;width:44px;height:21px;box-sizing:border-box;background:#fff;border:1px solid #b4bfd0;border-radius:2px;"></div>
<div class="t" style="left:885.00px;transform-origin:0 50%;transform:scaleX(0.9000);top:510.30px;font-size:12.00px;line-height:16px;letter-spacing:0.000px;color:#101010;-webkit-text-stroke:0.28px #101010;">07</div>
<svg style="position:absolute;left:912.2px;top:516.0px;" width="9" height="5" viewBox="0 0 9 5"><path d="M0.5 0.5 L4.5 4.5 L8.5 0.5" fill="none" stroke="#6f7378" stroke-width="1"/></svg>
<div class="t" style="left:-129.30px;width:1000px;text-align:right;transform-origin:100% 50%;transform:scaleX(0.8041);top:537.00px;font-size:12.00px;line-height:16px;letter-spacing:0.000px;color:#101010;-webkit-text-stroke:0.28px #101010;">CST Saída</div>
<div style="position:absolute;left:882px;top:535px;width:44px;height:21px;box-sizing:border-box;background:#fff;border:1px solid #b4bfd0;border-radius:2px;"></div>
<div class="t" style="left:885.00px;transform-origin:0 50%;transform:scaleX(0.9000);top:537.30px;font-size:12.00px;line-height:16px;letter-spacing:0.000px;color:#101010;-webkit-text-stroke:0.28px #101010;">07</div>
<svg style="position:absolute;left:912.2px;top:543.0px;" width="9" height="5" viewBox="0 0 9 5"><path d="M0.5 0.5 L4.5 4.5 L8.5 0.5" fill="none" stroke="#6f7378" stroke-width="1"/></svg>
<div class="t" style="left:-128.70px;width:1000px;text-align:right;transform-origin:100% 50%;transform:scaleX(0.8807);top:566.00px;font-size:12.00px;line-height:16px;letter-spacing:0.000px;color:#101010;-webkit-text-stroke:0.28px #101010;">Aliq. Pis %</div>
<div style="position:absolute;left:882px;top:564px;width:44px;height:21px;box-sizing:border-box;background:#fff;border:1px solid #b4bfd0;"></div>
<div class="t" style="left:-77.40px;width:1000px;text-align:right;transform-origin:100% 50%;transform:scaleX(0.9000);top:566.30px;font-size:12.00px;line-height:16px;letter-spacing:0.000px;color:#101010;-webkit-text-stroke:0.28px #101010;">0,00</div>
<div class="t" style="left:-128.70px;width:1000px;text-align:right;transform-origin:100% 50%;transform:scaleX(0.9038);top:595.00px;font-size:12.00px;line-height:16px;letter-spacing:0.000px;color:#101010;-webkit-text-stroke:0.28px #101010;">Aliq. Cofins %</div>
<div style="position:absolute;left:882px;top:593px;width:44px;height:21px;box-sizing:border-box;background:#fff;border:1px solid #b4bfd0;"></div>
<div class="t" style="left:-77.40px;width:1000px;text-align:right;transform-origin:100% 50%;transform:scaleX(0.9000);top:595.40px;font-size:12.00px;line-height:16px;letter-spacing:0.000px;color:#101010;-webkit-text-stroke:0.28px #101010;">0,00</div>
<div class="t" style="left:691.70px;transform-origin:0 50%;transform:scaleX(0.8601);top:636.80px;font-size:12.00px;line-height:16px;letter-spacing:0.000px;color:#101010;-webkit-text-stroke:0.28px #101010;">Cód. Benefício Fiscal</div>
<div style="position:absolute;left:797px;top:635px;width:134px;height:21px;box-sizing:border-box;background:#fff;border:1px solid #b4bfd0;"></div>
<div class="t" style="left:799.70px;transform-origin:0 50%;transform:scaleX(0.8424);top:637.30px;font-size:12.00px;line-height:16px;letter-spacing:0.000px;color:#7d7d7d;-webkit-text-stroke:0.28px #7d7d7d;">CBENEF</div>
<div style="position:absolute;left:937px;top:490px;width:121px;height:57px;box-sizing:border-box;border:1px solid #c3cfde"></div>
<div style="position:absolute;left:942.7px;top:487px;width:18.7px;height:6px;box-sizing:border-box;background:#eef3fb"></div>
<div class="t" style="left:944.70px;transform-origin:0 50%;transform:scaleX(0.9348);top:482.30px;font-size:12.00px;line-height:16px;letter-spacing:0.000px;color:#101010;-webkit-text-stroke:0.28px #101010;">IPI</div>
<div class="t" style="left:-13.80px;width:1000px;text-align:right;transform-origin:100% 50%;transform:scaleX(0.7750);top:498.90px;font-size:12.00px;line-height:16px;letter-spacing:0.000px;color:#101010;-webkit-text-stroke:0.28px #101010;">CST</div>
<div style="position:absolute;left:994px;top:495px;width:50px;height:21px;box-sizing:border-box;background:#fff;border:1px solid #b4bfd0;border-radius:2px;"></div>
<div class="t" style="left:997.50px;transform-origin:0 50%;transform:scaleX(0.8244);top:497.30px;font-size:12.00px;line-height:16px;letter-spacing:0.000px;color:#101010;-webkit-text-stroke:0.28px #101010;">53</div>
<svg style="position:absolute;left:1030.2px;top:503.5px;" width="9" height="5" viewBox="0 0 9 5"><path d="M0.5 0.5 L4.5 4.5 L8.5 0.5" fill="none" stroke="#6f7378" stroke-width="1"/></svg>
<div class="t" style="left:-13.80px;width:1000px;text-align:right;transform-origin:100% 50%;transform:scaleX(0.8679);top:523.70px;font-size:12.00px;line-height:16px;letter-spacing:0.000px;color:#101010;-webkit-text-stroke:0.28px #101010;">Alíquota</div>
<div style="position:absolute;left:994px;top:520px;width:50px;height:21px;box-sizing:border-box;background:#fff;border:1px solid #b4bfd0;"></div>
<div class="t" style="left:40.50px;width:1000px;text-align:right;transform-origin:100% 50%;transform:scaleX(0.9000);top:522.50px;font-size:12.00px;line-height:16px;letter-spacing:0.000px;color:#101010;-webkit-text-stroke:0.28px #101010;">0,00</div>
<div style="position:absolute;left:937px;top:555px;width:121px;height:102px;box-sizing:border-box;border:1px solid #c3cfde"></div>
<div style="position:absolute;left:942.7px;top:552px;width:37.6px;height:6px;box-sizing:border-box;background:#eef3fb"></div>
<div class="t" style="left:944.70px;transform-origin:0 50%;transform:scaleX(0.9056);top:547.20px;font-size:12.00px;line-height:16px;letter-spacing:0.000px;color:#101010;-webkit-text-stroke:0.28px #101010;">Outros</div>
<div class="t" style="left:-12.90px;width:1000px;text-align:right;transform-origin:100% 50%;transform:scaleX(0.8342);top:571.30px;font-size:12.00px;line-height:16px;letter-spacing:0.000px;color:#101010;-webkit-text-stroke:0.28px #101010;">% FCP</div>
<div style="position:absolute;left:994px;top:569px;width:50px;height:21px;box-sizing:border-box;background:#fff;border:1px solid #b4bfd0;"></div>
<div class="t" style="left:40.50px;width:1000px;text-align:right;transform-origin:100% 50%;transform:scaleX(0.9000);top:571.50px;font-size:12.00px;line-height:16px;letter-spacing:0.000px;color:#101010;-webkit-text-stroke:0.28px #101010;">0,00</div>
<div class="t" style="left:-10.00px;width:1000px;text-align:right;transform-origin:100% 50%;transform:scaleX(0.8591);top:598.10px;font-size:12.00px;line-height:16px;letter-spacing:0.000px;color:#101010;-webkit-text-stroke:0.28px #101010;">% MVA</div>
<div style="position:absolute;left:994px;top:596px;width:50px;height:21px;box-sizing:border-box;background:#fff;border:1px solid #b4bfd0;"></div>
<div class="t" style="left:40.50px;width:1000px;text-align:right;transform-origin:100% 50%;transform:scaleX(0.9000);top:598.30px;font-size:12.00px;line-height:16px;letter-spacing:0.000px;color:#101010;-webkit-text-stroke:0.28px #101010;">0,00</div>
<div class="t" style="left:947.20px;transform-origin:0 50%;transform:scaleX(0.8611);top:617.30px;font-size:12.00px;line-height:16px;letter-spacing:0.000px;color:#101010;-webkit-text-stroke:0.28px #101010;">% Base</div>
<div class="t" style="left:946.60px;transform-origin:0 50%;transform:scaleX(0.8560);top:629.40px;font-size:12.00px;line-height:16px;letter-spacing:0.000px;color:#101010;-webkit-text-stroke:0.28px #101010;">Reduzida</div>
<div style="position:absolute;left:994px;top:624px;width:50px;height:21px;box-sizing:border-box;background:#fff;border:1px solid #b4bfd0;"></div>
<div class="t" style="left:40.50px;width:1000px;text-align:right;transform-origin:100% 50%;transform:scaleX(0.9000);top:626.30px;font-size:12.00px;line-height:16px;letter-spacing:0.000px;color:#101010;-webkit-text-stroke:0.28px #101010;">0,00</div>
<div class="t" style="left:1106.60px;transform-origin:0 50%;transform:scaleX(0.9052);top:456.30px;font-size:12.00px;line-height:16px;letter-spacing:0.000px;color:#101010;-webkit-text-stroke:0.28px #101010;">Dois cliques para alterar a foto.</div>
<div style="position:absolute;left:1107px;top:475px;width:149px;height:202px;box-sizing:border-box;border:1px solid #c3cddb;border-right-color:#aeb8c8;border-bottom-color:#a9b4c6;border-radius:2px"></div>
<div style="position:absolute;left:1262px;top:464px;width:123px;height:213px;box-sizing:border-box;border:1px solid #c3cfde"></div>
<div style="position:absolute;left:1267.2px;top:461px;width:60.1px;height:6px;box-sizing:border-box;background:#eef3fb"></div>
<div class="t" style="left:1269.20px;transform-origin:0 50%;transform:scaleX(0.8885);top:456.00px;font-size:12.00px;line-height:16px;letter-spacing:0.000px;color:#101010;-webkit-text-stroke:0.28px #101010;">Parâmetros</div>
<div style="position:absolute;left:1269px;top:478px;width:13px;height:13px;box-sizing:border-box;background:#2f7de1;border-radius:2px"></div>
<svg style="position:absolute;left:1269px;top:478px;" width="13" height="13" viewBox="0 0 13 13"><path d="M3 6.8 L5.5 9.2 L10.2 3.8" fill="none" stroke="#fff" stroke-width="1.2"/></svg>
<div class="t" style="left:1285.80px;transform-origin:0 50%;transform:scaleX(0.9073);top:476.90px;font-size:12.00px;line-height:16px;letter-spacing:0.000px;color:#101010;-webkit-text-stroke:0.28px #101010;">Ativo</div>
<div style="position:absolute;left:1269px;top:495px;width:13px;height:13px;box-sizing:border-box;background:#2f7de1;border-radius:2px"></div>
<svg style="position:absolute;left:1269px;top:495px;" width="13" height="13" viewBox="0 0 13 13"><path d="M3 6.8 L5.5 9.2 L10.2 3.8" fill="none" stroke="#fff" stroke-width="1.2"/></svg>
<div class="t" style="left:1285.80px;transform-origin:0 50%;transform:scaleX(0.8108);top:493.70px;font-size:12.00px;line-height:16px;letter-spacing:0.000px;color:#101010;-webkit-text-stroke:0.28px #101010;">É Fiscal</div>
<div style="position:absolute;left:1269px;top:512px;width:13px;height:13px;box-sizing:border-box;background:#fff;border:1px solid #3b4661;border-radius:2px"></div>
<div class="t" style="left:1285.80px;transform-origin:0 50%;transform:scaleX(0.8406);top:511.00px;font-size:12.00px;line-height:16px;letter-spacing:0.000px;color:#101010;-webkit-text-stroke:0.28px #101010;">Paga Comissão</div>
<div style="position:absolute;left:1269px;top:528px;width:13px;height:13px;box-sizing:border-box;background:#fff;border:1px solid #3b4661;border-radius:2px"></div>
<div class="t" style="left:1285.80px;transform-origin:0 50%;transform:scaleX(0.8737);top:527.10px;font-size:12.00px;line-height:16px;letter-spacing:0.000px;color:#101010;-webkit-text-stroke:0.28px #101010;">Preço Variavel</div>
<div style="position:absolute;left:1269px;top:544px;width:13px;height:13px;box-sizing:border-box;background:#fff;border:1px solid #3b4661;border-radius:2px"></div>
<div class="t" style="left:1285.80px;transform-origin:0 50%;transform:scaleX(0.8440);top:542.30px;font-size:12.00px;line-height:16px;letter-spacing:0.000px;color:#101010;-webkit-text-stroke:0.28px #101010;">Composição</div>
<div style="position:absolute;left:1269px;top:560px;width:13px;height:13px;box-sizing:border-box;background:#fff;border:1px solid #3b4661;border-radius:2px"></div>
<div class="t" style="left:1285.80px;transform-origin:0 50%;transform:scaleX(0.8647);top:558.40px;font-size:12.00px;line-height:16px;letter-spacing:0.000px;color:#101010;-webkit-text-stroke:0.28px #101010;">Serviço</div>
<div style="position:absolute;left:1269px;top:575px;width:13px;height:13px;box-sizing:border-box;background:#fff;border:1px solid #3b4661;border-radius:2px"></div>
<div class="t" style="left:1285.80px;transform-origin:0 50%;transform:scaleX(0.8517);top:574.00px;font-size:12.00px;line-height:16px;letter-spacing:0.000px;color:#101010;-webkit-text-stroke:0.28px #101010;">Grade</div>
<div style="position:absolute;left:1269px;top:591px;width:13px;height:13px;box-sizing:border-box;background:#fff;border:1px solid #3b4661;border-radius:2px"></div>
<div class="t" style="left:1285.80px;transform-origin:0 50%;transform:scaleX(0.8928);top:590.10px;font-size:12.00px;line-height:16px;letter-spacing:0.000px;color:#101010;-webkit-text-stroke:0.28px #101010;">Usar Tab. Preço</div>
<div style="position:absolute;left:1269px;top:607px;width:13px;height:13px;box-sizing:border-box;background:#2f7de1;border-radius:2px"></div>
<div style="position:absolute;left:1272px;top:613px;width:7px;height:1.2px;box-sizing:border-box;background:#fff"></div>
<div class="t" style="left:1285.80px;transform-origin:0 50%;transform:scaleX(0.8622);top:605.90px;font-size:12.00px;line-height:16px;letter-spacing:0.000px;color:#101010;-webkit-text-stroke:0.28px #101010;">Combustível</div>
<div style="position:absolute;left:1269px;top:623px;width:13px;height:13px;box-sizing:border-box;background:#fff;border:1px solid #3b4661;border-radius:2px"></div>
<div class="t" style="left:1285.80px;transform-origin:0 50%;transform:scaleX(0.8555);top:621.90px;font-size:12.00px;line-height:16px;letter-spacing:0.000px;color:#101010;-webkit-text-stroke:0.28px #101010;">Usa IMEI</div>
<div style="position:absolute;left:1269px;top:640px;width:13px;height:13px;box-sizing:border-box;background:#fff;border:1px solid #3b4661;border-radius:2px"></div>
<div class="t" style="left:1285.80px;transform-origin:0 50%;transform:scaleX(0.9086);top:639.20px;font-size:12.00px;line-height:16px;letter-spacing:0.000px;color:#101010;-webkit-text-stroke:0.28px #101010;">Contr. Est. Grade</div>
<div style="position:absolute;left:1269px;top:658px;width:13px;height:13px;box-sizing:border-box;background:#2f7de1;border-radius:2px"></div>
<svg style="position:absolute;left:1269px;top:658px;" width="13" height="13" viewBox="0 0 13 13"><path d="M3 6.8 L5.5 9.2 L10.2 3.8" fill="none" stroke="#fff" stroke-width="1.2"/></svg>
<div class="t" style="left:1285.80px;transform-origin:0 50%;transform:scaleX(0.9046);top:656.80px;font-size:12.00px;line-height:16px;letter-spacing:0.000px;color:#101010;-webkit-text-stroke:0.28px #101010;">Mostrar no App</div>
<div style="position:absolute;left:538px;top:694px;width:150px;height:51px;box-sizing:border-box;background:#4f4f4f;border:1px solid #3c3c3c;border-radius:4px"></div>
<svg style="position:absolute;left:563px;top:705px;" width="28" height="28" viewBox="0 0 28 28"><defs><radialGradient id="gg" cx="0.4" cy="0.3" r="0.8"><stop offset="0" stop-color="#b8e65a"/><stop offset="0.6" stop-color="#6db52a"/><stop offset="1" stop-color="#3f8a12"/></radialGradient></defs>
<circle cx="13.8" cy="13.6" r="13.3" fill="url(#gg)"/><path d="M6 14 L11.5 19.5 L21.5 7.5" fill="none" stroke="#ffffff" stroke-width="3.2" stroke-linejoin="round"/></svg>
<div class="t" style="left:597.20px;transform-origin:0 50%;transform:scaleX(0.9246);top:709.50px;font-size:15.00px;line-height:20px;letter-spacing:0.000px;color:#eef2f8;">F5 | Salvar</div>
<div style="position:absolute;left:695px;top:694px;width:150px;height:51px;box-sizing:border-box;background:#4f4f4f;border:1px solid #3c3c3c;border-radius:4px"></div>
<svg style="position:absolute;left:720px;top:705px;" width="28" height="28" viewBox="0 0 28 28"><defs><radialGradient id="rg" cx="0.4" cy="0.3" r="0.8"><stop offset="0" stop-color="#f27a6a"/><stop offset="0.6" stop-color="#d9342a"/><stop offset="1" stop-color="#a81a12"/></radialGradient></defs>
<circle cx="13.7" cy="13.6" r="13.3" fill="url(#rg)"/><path d="M8.5 8.5 L19 19 M19 8.5 L8.5 19" stroke="#ffffff" stroke-width="3.6" stroke-linecap="round"/></svg>
<div class="t" style="left:757.30px;transform-origin:0 50%;transform:scaleX(0.8848);top:709.50px;font-size:15.00px;line-height:20px;letter-spacing:0.000px;color:#eef2f8;">ESC | Sair</div>
<div class="t" style="left:1050.90px;transform-origin:0 50%;transform:scaleX(1.0141);top:700.20px;font-size:14.50px;line-height:19px;letter-spacing:0.000px;color:#101010;-webkit-text-stroke:0.28px #101010;">* As opções Grade e Composição estarão</div>
<div class="t" style="left:1051.50px;transform-origin:0 50%;transform:scaleX(1.0146);top:720.50px;font-size:14.50px;line-height:19px;letter-spacing:0.000px;color:#101010;-webkit-text-stroke:0.28px #101010;">disponíveis somente na edição desse item.</div>
</body></html>
